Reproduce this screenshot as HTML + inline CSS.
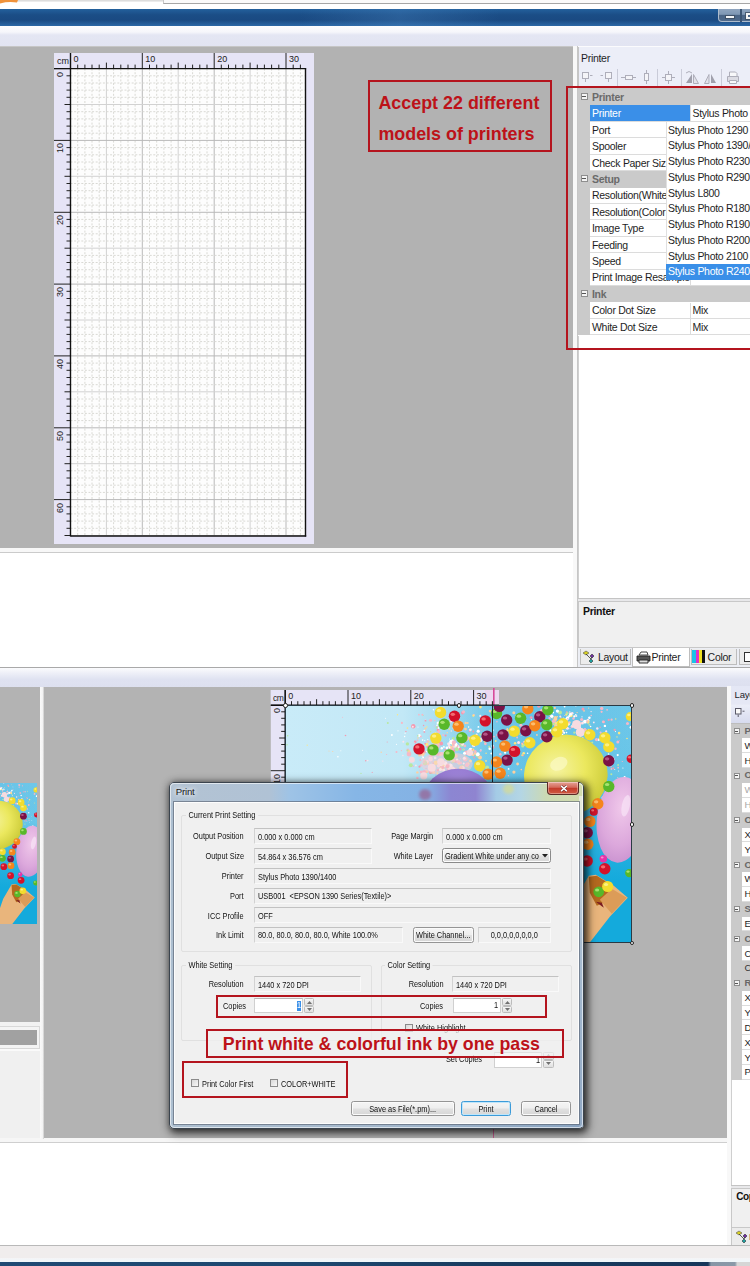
<!DOCTYPE html>
<html><head><meta charset="utf-8"><title>Print settings</title>
<style>
html,body{margin:0;padding:0}
body{width:750px;height:1266px;position:relative;overflow:hidden;background:#fff;font-family:"Liberation Sans",sans-serif;font-size:11px;color:#1a1a1a}
div,span.t,svg{position:absolute;box-sizing:border-box}
span.t{white-space:nowrap;line-height:1;letter-spacing:-.3px;font-size:10.5px}
span.t.d{font-size:9px;letter-spacing:0;transform:scaleX(.82);transform-origin:0 0;color:#111}
span.t.dr{font-size:9px;letter-spacing:0;transform:scaleX(.82);transform-origin:100% 0;color:#111;text-align:right}
.fld{border:1px solid #f9f9f9;border-top-color:#c2c2c2;border-left-color:#d2d2d2;background:#f0f0f0}
.red{border:2px solid #b4141e}
span.t.rt{font-weight:bold;color:#bd1219;letter-spacing:0;font-size:17.9px}
</style></head>
<body>
<div style="left:0px;top:0px;width:750px;height:9px;background:#fff"></div>
<div style="left:0px;top:0px;width:163px;height:2px;background:linear-gradient(#d6d6d6,#f2f2f2)"></div>
<div style="left:163px;top:0px;width:587px;height:4px;background:#fafafa;border-bottom:1px solid #a6a6a6;border-left:1px solid #c8c8c8"></div>
<svg style="left:0;top:0" width="20" height="4"><path d="M0 0H18L17 2.6Q9 1.2 0 3.4Z" fill="#f0923a"/></svg>
<div style="left:0px;top:9px;width:750px;height:17px;background:linear-gradient(#23609c 0%,#1b4d86 35%,#1a4a82 65%,#2c68a6 100%)"></div>
<div style="left:300px;top:9px;width:200px;height:17px;background:linear-gradient(90deg,rgba(70,130,190,0),rgba(70,130,190,.35),rgba(70,130,190,0))"></div>
<div style="left:718.4px;top:8.8px;width:40px;height:13.4px;border:1px solid #aebccc;border-top:none;border-radius:0 0 0 4px;background:linear-gradient(#8fa5bf,#7f97b4 45%,#4a6485 50%,#4f6a8c)"></div>
<div style="left:725.6px;top:16px;width:8px;height:2.2px;background:#f4f6f8;box-shadow:0 0 0 1px rgba(60,76,96,.8)"></div>
<div style="left:740.4px;top:9px;width:1.2px;height:12.6px;background:#3b5472"></div>
<div style="left:746px;top:13.2px;width:8px;height:6px;border:2px solid #f4f4f4;box-shadow:0 0 0 1px rgba(60,76,96,.8)"></div>
<div style="left:0px;top:26px;width:750px;height:20px;background:linear-gradient(#fdfdfe 0,#f6f6fb 30%,#e4e6f3 45%,#e2e4f2 100%)"></div>
<div style="left:0px;top:46px;width:573px;height:502px;background:#b2b2b2;border-top:1px solid #c6c6c6"></div>
<div style="left:0px;top:548px;width:573px;height:4.2px;background:#f7f7f7"></div>
<div style="left:0px;top:552.2px;width:573px;height:1.3px;background:#cbcbcb"></div>
<svg style="left:54px;top:53px" width="260" height="491" viewBox="0 0 260 491"><rect width="260" height="491" fill="#e6e4f6"/><rect x="16.5" y="15.599999999999994" width="235.0" height="467.4" fill="#fdfdfd"/><line x1="23.7" y1="15.599999999999994" x2="23.7" y2="483.0" stroke="#d9d9d4" stroke-width="1" stroke-dasharray="2 1.6"/><line x1="30.9" y1="15.599999999999994" x2="30.9" y2="483.0" stroke="#d9d9d4" stroke-width="1" stroke-dasharray="2 1.6"/><line x1="38.0" y1="15.599999999999994" x2="38.0" y2="483.0" stroke="#d9d9d4" stroke-width="1" stroke-dasharray="2 1.6"/><line x1="45.2" y1="15.599999999999994" x2="45.2" y2="483.0" stroke="#d9d9d4" stroke-width="1" stroke-dasharray="2 1.6"/><line x1="52.4" y1="15.599999999999994" x2="52.4" y2="483.0" stroke="#d2d2d2" stroke-width="1"/><line x1="59.6" y1="15.599999999999994" x2="59.6" y2="483.0" stroke="#d9d9d4" stroke-width="1" stroke-dasharray="2 1.6"/><line x1="66.8" y1="15.599999999999994" x2="66.8" y2="483.0" stroke="#d9d9d4" stroke-width="1" stroke-dasharray="2 1.6"/><line x1="74.0" y1="15.599999999999994" x2="74.0" y2="483.0" stroke="#d9d9d4" stroke-width="1" stroke-dasharray="2 1.6"/><line x1="81.1" y1="15.599999999999994" x2="81.1" y2="483.0" stroke="#d9d9d4" stroke-width="1" stroke-dasharray="2 1.6"/><line x1="88.3" y1="15.599999999999994" x2="88.3" y2="483.0" stroke="#b9b9b9" stroke-width="1"/><line x1="95.5" y1="15.599999999999994" x2="95.5" y2="483.0" stroke="#d9d9d4" stroke-width="1" stroke-dasharray="2 1.6"/><line x1="102.7" y1="15.599999999999994" x2="102.7" y2="483.0" stroke="#d9d9d4" stroke-width="1" stroke-dasharray="2 1.6"/><line x1="109.9" y1="15.599999999999994" x2="109.9" y2="483.0" stroke="#d9d9d4" stroke-width="1" stroke-dasharray="2 1.6"/><line x1="117.1" y1="15.599999999999994" x2="117.1" y2="483.0" stroke="#d9d9d4" stroke-width="1" stroke-dasharray="2 1.6"/><line x1="124.2" y1="15.599999999999994" x2="124.2" y2="483.0" stroke="#d2d2d2" stroke-width="1"/><line x1="131.4" y1="15.599999999999994" x2="131.4" y2="483.0" stroke="#d9d9d4" stroke-width="1" stroke-dasharray="2 1.6"/><line x1="138.6" y1="15.599999999999994" x2="138.6" y2="483.0" stroke="#d9d9d4" stroke-width="1" stroke-dasharray="2 1.6"/><line x1="145.8" y1="15.599999999999994" x2="145.8" y2="483.0" stroke="#d9d9d4" stroke-width="1" stroke-dasharray="2 1.6"/><line x1="153.0" y1="15.599999999999994" x2="153.0" y2="483.0" stroke="#d9d9d4" stroke-width="1" stroke-dasharray="2 1.6"/><line x1="160.2" y1="15.599999999999994" x2="160.2" y2="483.0" stroke="#b9b9b9" stroke-width="1"/><line x1="167.3" y1="15.599999999999994" x2="167.3" y2="483.0" stroke="#d9d9d4" stroke-width="1" stroke-dasharray="2 1.6"/><line x1="174.5" y1="15.599999999999994" x2="174.5" y2="483.0" stroke="#d9d9d4" stroke-width="1" stroke-dasharray="2 1.6"/><line x1="181.7" y1="15.599999999999994" x2="181.7" y2="483.0" stroke="#d9d9d4" stroke-width="1" stroke-dasharray="2 1.6"/><line x1="188.9" y1="15.599999999999994" x2="188.9" y2="483.0" stroke="#d9d9d4" stroke-width="1" stroke-dasharray="2 1.6"/><line x1="196.1" y1="15.599999999999994" x2="196.1" y2="483.0" stroke="#d2d2d2" stroke-width="1"/><line x1="203.3" y1="15.599999999999994" x2="203.3" y2="483.0" stroke="#d9d9d4" stroke-width="1" stroke-dasharray="2 1.6"/><line x1="210.4" y1="15.599999999999994" x2="210.4" y2="483.0" stroke="#d9d9d4" stroke-width="1" stroke-dasharray="2 1.6"/><line x1="217.6" y1="15.599999999999994" x2="217.6" y2="483.0" stroke="#d9d9d4" stroke-width="1" stroke-dasharray="2 1.6"/><line x1="224.8" y1="15.599999999999994" x2="224.8" y2="483.0" stroke="#d9d9d4" stroke-width="1" stroke-dasharray="2 1.6"/><line x1="232.0" y1="15.599999999999994" x2="232.0" y2="483.0" stroke="#b9b9b9" stroke-width="1"/><line x1="239.2" y1="15.599999999999994" x2="239.2" y2="483.0" stroke="#d9d9d4" stroke-width="1" stroke-dasharray="2 1.6"/><line x1="246.4" y1="15.599999999999994" x2="246.4" y2="483.0" stroke="#d9d9d4" stroke-width="1" stroke-dasharray="2 1.6"/><line x1="16.5" y1="22.8" x2="251.5" y2="22.8" stroke="#d9d9d4" stroke-width="1" stroke-dasharray="2 1.6"/><line x1="16.5" y1="30.0" x2="251.5" y2="30.0" stroke="#d9d9d4" stroke-width="1" stroke-dasharray="2 1.6"/><line x1="16.5" y1="37.1" x2="251.5" y2="37.1" stroke="#d9d9d4" stroke-width="1" stroke-dasharray="2 1.6"/><line x1="16.5" y1="44.3" x2="251.5" y2="44.3" stroke="#d9d9d4" stroke-width="1" stroke-dasharray="2 1.6"/><line x1="16.5" y1="51.5" x2="251.5" y2="51.5" stroke="#d2d2d2" stroke-width="1"/><line x1="16.5" y1="58.7" x2="251.5" y2="58.7" stroke="#d9d9d4" stroke-width="1" stroke-dasharray="2 1.6"/><line x1="16.5" y1="65.9" x2="251.5" y2="65.9" stroke="#d9d9d4" stroke-width="1" stroke-dasharray="2 1.6"/><line x1="16.5" y1="73.1" x2="251.5" y2="73.1" stroke="#d9d9d4" stroke-width="1" stroke-dasharray="2 1.6"/><line x1="16.5" y1="80.2" x2="251.5" y2="80.2" stroke="#d9d9d4" stroke-width="1" stroke-dasharray="2 1.6"/><line x1="16.5" y1="87.4" x2="251.5" y2="87.4" stroke="#b9b9b9" stroke-width="1"/><line x1="16.5" y1="94.6" x2="251.5" y2="94.6" stroke="#d9d9d4" stroke-width="1" stroke-dasharray="2 1.6"/><line x1="16.5" y1="101.8" x2="251.5" y2="101.8" stroke="#d9d9d4" stroke-width="1" stroke-dasharray="2 1.6"/><line x1="16.5" y1="109.0" x2="251.5" y2="109.0" stroke="#d9d9d4" stroke-width="1" stroke-dasharray="2 1.6"/><line x1="16.5" y1="116.2" x2="251.5" y2="116.2" stroke="#d9d9d4" stroke-width="1" stroke-dasharray="2 1.6"/><line x1="16.5" y1="123.3" x2="251.5" y2="123.3" stroke="#d2d2d2" stroke-width="1"/><line x1="16.5" y1="130.5" x2="251.5" y2="130.5" stroke="#d9d9d4" stroke-width="1" stroke-dasharray="2 1.6"/><line x1="16.5" y1="137.7" x2="251.5" y2="137.7" stroke="#d9d9d4" stroke-width="1" stroke-dasharray="2 1.6"/><line x1="16.5" y1="144.9" x2="251.5" y2="144.9" stroke="#d9d9d4" stroke-width="1" stroke-dasharray="2 1.6"/><line x1="16.5" y1="152.1" x2="251.5" y2="152.1" stroke="#d9d9d4" stroke-width="1" stroke-dasharray="2 1.6"/><line x1="16.5" y1="159.3" x2="251.5" y2="159.3" stroke="#b9b9b9" stroke-width="1"/><line x1="16.5" y1="166.4" x2="251.5" y2="166.4" stroke="#d9d9d4" stroke-width="1" stroke-dasharray="2 1.6"/><line x1="16.5" y1="173.6" x2="251.5" y2="173.6" stroke="#d9d9d4" stroke-width="1" stroke-dasharray="2 1.6"/><line x1="16.5" y1="180.8" x2="251.5" y2="180.8" stroke="#d9d9d4" stroke-width="1" stroke-dasharray="2 1.6"/><line x1="16.5" y1="188.0" x2="251.5" y2="188.0" stroke="#d9d9d4" stroke-width="1" stroke-dasharray="2 1.6"/><line x1="16.5" y1="195.2" x2="251.5" y2="195.2" stroke="#d2d2d2" stroke-width="1"/><line x1="16.5" y1="202.4" x2="251.5" y2="202.4" stroke="#d9d9d4" stroke-width="1" stroke-dasharray="2 1.6"/><line x1="16.5" y1="209.5" x2="251.5" y2="209.5" stroke="#d9d9d4" stroke-width="1" stroke-dasharray="2 1.6"/><line x1="16.5" y1="216.7" x2="251.5" y2="216.7" stroke="#d9d9d4" stroke-width="1" stroke-dasharray="2 1.6"/><line x1="16.5" y1="223.9" x2="251.5" y2="223.9" stroke="#d9d9d4" stroke-width="1" stroke-dasharray="2 1.6"/><line x1="16.5" y1="231.1" x2="251.5" y2="231.1" stroke="#b9b9b9" stroke-width="1"/><line x1="16.5" y1="238.3" x2="251.5" y2="238.3" stroke="#d9d9d4" stroke-width="1" stroke-dasharray="2 1.6"/><line x1="16.5" y1="245.5" x2="251.5" y2="245.5" stroke="#d9d9d4" stroke-width="1" stroke-dasharray="2 1.6"/><line x1="16.5" y1="252.6" x2="251.5" y2="252.6" stroke="#d9d9d4" stroke-width="1" stroke-dasharray="2 1.6"/><line x1="16.5" y1="259.8" x2="251.5" y2="259.8" stroke="#d9d9d4" stroke-width="1" stroke-dasharray="2 1.6"/><line x1="16.5" y1="267.0" x2="251.5" y2="267.0" stroke="#d2d2d2" stroke-width="1"/><line x1="16.5" y1="274.2" x2="251.5" y2="274.2" stroke="#d9d9d4" stroke-width="1" stroke-dasharray="2 1.6"/><line x1="16.5" y1="281.4" x2="251.5" y2="281.4" stroke="#d9d9d4" stroke-width="1" stroke-dasharray="2 1.6"/><line x1="16.5" y1="288.6" x2="251.5" y2="288.6" stroke="#d9d9d4" stroke-width="1" stroke-dasharray="2 1.6"/><line x1="16.5" y1="295.7" x2="251.5" y2="295.7" stroke="#d9d9d4" stroke-width="1" stroke-dasharray="2 1.6"/><line x1="16.5" y1="302.9" x2="251.5" y2="302.9" stroke="#b9b9b9" stroke-width="1"/><line x1="16.5" y1="310.1" x2="251.5" y2="310.1" stroke="#d9d9d4" stroke-width="1" stroke-dasharray="2 1.6"/><line x1="16.5" y1="317.3" x2="251.5" y2="317.3" stroke="#d9d9d4" stroke-width="1" stroke-dasharray="2 1.6"/><line x1="16.5" y1="324.5" x2="251.5" y2="324.5" stroke="#d9d9d4" stroke-width="1" stroke-dasharray="2 1.6"/><line x1="16.5" y1="331.7" x2="251.5" y2="331.7" stroke="#d9d9d4" stroke-width="1" stroke-dasharray="2 1.6"/><line x1="16.5" y1="338.8" x2="251.5" y2="338.8" stroke="#d2d2d2" stroke-width="1"/><line x1="16.5" y1="346.0" x2="251.5" y2="346.0" stroke="#d9d9d4" stroke-width="1" stroke-dasharray="2 1.6"/><line x1="16.5" y1="353.2" x2="251.5" y2="353.2" stroke="#d9d9d4" stroke-width="1" stroke-dasharray="2 1.6"/><line x1="16.5" y1="360.4" x2="251.5" y2="360.4" stroke="#d9d9d4" stroke-width="1" stroke-dasharray="2 1.6"/><line x1="16.5" y1="367.6" x2="251.5" y2="367.6" stroke="#d9d9d4" stroke-width="1" stroke-dasharray="2 1.6"/><line x1="16.5" y1="374.8" x2="251.5" y2="374.8" stroke="#b9b9b9" stroke-width="1"/><line x1="16.5" y1="381.9" x2="251.5" y2="381.9" stroke="#d9d9d4" stroke-width="1" stroke-dasharray="2 1.6"/><line x1="16.5" y1="389.1" x2="251.5" y2="389.1" stroke="#d9d9d4" stroke-width="1" stroke-dasharray="2 1.6"/><line x1="16.5" y1="396.3" x2="251.5" y2="396.3" stroke="#d9d9d4" stroke-width="1" stroke-dasharray="2 1.6"/><line x1="16.5" y1="403.5" x2="251.5" y2="403.5" stroke="#d9d9d4" stroke-width="1" stroke-dasharray="2 1.6"/><line x1="16.5" y1="410.7" x2="251.5" y2="410.7" stroke="#d2d2d2" stroke-width="1"/><line x1="16.5" y1="417.8" x2="251.5" y2="417.8" stroke="#d9d9d4" stroke-width="1" stroke-dasharray="2 1.6"/><line x1="16.5" y1="425.0" x2="251.5" y2="425.0" stroke="#d9d9d4" stroke-width="1" stroke-dasharray="2 1.6"/><line x1="16.5" y1="432.2" x2="251.5" y2="432.2" stroke="#d9d9d4" stroke-width="1" stroke-dasharray="2 1.6"/><line x1="16.5" y1="439.4" x2="251.5" y2="439.4" stroke="#d9d9d4" stroke-width="1" stroke-dasharray="2 1.6"/><line x1="16.5" y1="446.6" x2="251.5" y2="446.6" stroke="#b9b9b9" stroke-width="1"/><line x1="16.5" y1="453.8" x2="251.5" y2="453.8" stroke="#d9d9d4" stroke-width="1" stroke-dasharray="2 1.6"/><line x1="16.5" y1="460.9" x2="251.5" y2="460.9" stroke="#d9d9d4" stroke-width="1" stroke-dasharray="2 1.6"/><line x1="16.5" y1="468.1" x2="251.5" y2="468.1" stroke="#d9d9d4" stroke-width="1" stroke-dasharray="2 1.6"/><line x1="16.5" y1="475.3" x2="251.5" y2="475.3" stroke="#d9d9d4" stroke-width="1" stroke-dasharray="2 1.6"/><line x1="16.5" y1="482.5" x2="251.5" y2="482.5" stroke="#d2d2d2" stroke-width="1"/></svg>
<svg style="left:0;top:0" width="320" height="550"><line x1="70.5" y1="53.0" x2="70.5" y2="68.6" stroke="#222" stroke-width="1"/><line x1="77.7" y1="64.6" x2="77.7" y2="68.6" stroke="#222" stroke-width="1"/><line x1="84.9" y1="64.6" x2="84.9" y2="68.6" stroke="#222" stroke-width="1"/><line x1="92.0" y1="64.6" x2="92.0" y2="68.6" stroke="#222" stroke-width="1"/><line x1="99.2" y1="64.6" x2="99.2" y2="68.6" stroke="#222" stroke-width="1"/><line x1="106.4" y1="62.599999999999994" x2="106.4" y2="68.6" stroke="#222" stroke-width="1"/><line x1="113.6" y1="64.6" x2="113.6" y2="68.6" stroke="#222" stroke-width="1"/><line x1="120.8" y1="64.6" x2="120.8" y2="68.6" stroke="#222" stroke-width="1"/><line x1="128.0" y1="64.6" x2="128.0" y2="68.6" stroke="#222" stroke-width="1"/><line x1="135.1" y1="64.6" x2="135.1" y2="68.6" stroke="#222" stroke-width="1"/><line x1="142.3" y1="53.0" x2="142.3" y2="68.6" stroke="#222" stroke-width="1"/><line x1="149.5" y1="64.6" x2="149.5" y2="68.6" stroke="#222" stroke-width="1"/><line x1="156.7" y1="64.6" x2="156.7" y2="68.6" stroke="#222" stroke-width="1"/><line x1="163.9" y1="64.6" x2="163.9" y2="68.6" stroke="#222" stroke-width="1"/><line x1="171.1" y1="64.6" x2="171.1" y2="68.6" stroke="#222" stroke-width="1"/><line x1="178.2" y1="62.599999999999994" x2="178.2" y2="68.6" stroke="#222" stroke-width="1"/><line x1="185.4" y1="64.6" x2="185.4" y2="68.6" stroke="#222" stroke-width="1"/><line x1="192.6" y1="64.6" x2="192.6" y2="68.6" stroke="#222" stroke-width="1"/><line x1="199.8" y1="64.6" x2="199.8" y2="68.6" stroke="#222" stroke-width="1"/><line x1="207.0" y1="64.6" x2="207.0" y2="68.6" stroke="#222" stroke-width="1"/><line x1="214.2" y1="53.0" x2="214.2" y2="68.6" stroke="#222" stroke-width="1"/><line x1="221.3" y1="64.6" x2="221.3" y2="68.6" stroke="#222" stroke-width="1"/><line x1="228.5" y1="64.6" x2="228.5" y2="68.6" stroke="#222" stroke-width="1"/><line x1="235.7" y1="64.6" x2="235.7" y2="68.6" stroke="#222" stroke-width="1"/><line x1="242.9" y1="64.6" x2="242.9" y2="68.6" stroke="#222" stroke-width="1"/><line x1="250.1" y1="62.599999999999994" x2="250.1" y2="68.6" stroke="#222" stroke-width="1"/><line x1="257.3" y1="64.6" x2="257.3" y2="68.6" stroke="#222" stroke-width="1"/><line x1="264.4" y1="64.6" x2="264.4" y2="68.6" stroke="#222" stroke-width="1"/><line x1="271.6" y1="64.6" x2="271.6" y2="68.6" stroke="#222" stroke-width="1"/><line x1="278.8" y1="64.6" x2="278.8" y2="68.6" stroke="#222" stroke-width="1"/><line x1="286.0" y1="53.0" x2="286.0" y2="68.6" stroke="#222" stroke-width="1"/><line x1="293.2" y1="64.6" x2="293.2" y2="68.6" stroke="#222" stroke-width="1"/><line x1="300.4" y1="64.6" x2="300.4" y2="68.6" stroke="#222" stroke-width="1"/><line x1="54.0" y1="68.6" x2="70.5" y2="68.6" stroke="#222" stroke-width="1"/><line x1="66.5" y1="75.8" x2="70.5" y2="75.8" stroke="#222" stroke-width="1"/><line x1="66.5" y1="83.0" x2="70.5" y2="83.0" stroke="#222" stroke-width="1"/><line x1="66.5" y1="90.1" x2="70.5" y2="90.1" stroke="#222" stroke-width="1"/><line x1="66.5" y1="97.3" x2="70.5" y2="97.3" stroke="#222" stroke-width="1"/><line x1="64.5" y1="104.5" x2="70.5" y2="104.5" stroke="#222" stroke-width="1"/><line x1="66.5" y1="111.7" x2="70.5" y2="111.7" stroke="#222" stroke-width="1"/><line x1="66.5" y1="118.9" x2="70.5" y2="118.9" stroke="#222" stroke-width="1"/><line x1="66.5" y1="126.1" x2="70.5" y2="126.1" stroke="#222" stroke-width="1"/><line x1="66.5" y1="133.2" x2="70.5" y2="133.2" stroke="#222" stroke-width="1"/><line x1="54.0" y1="140.4" x2="70.5" y2="140.4" stroke="#222" stroke-width="1"/><line x1="66.5" y1="147.6" x2="70.5" y2="147.6" stroke="#222" stroke-width="1"/><line x1="66.5" y1="154.8" x2="70.5" y2="154.8" stroke="#222" stroke-width="1"/><line x1="66.5" y1="162.0" x2="70.5" y2="162.0" stroke="#222" stroke-width="1"/><line x1="66.5" y1="169.2" x2="70.5" y2="169.2" stroke="#222" stroke-width="1"/><line x1="64.5" y1="176.3" x2="70.5" y2="176.3" stroke="#222" stroke-width="1"/><line x1="66.5" y1="183.5" x2="70.5" y2="183.5" stroke="#222" stroke-width="1"/><line x1="66.5" y1="190.7" x2="70.5" y2="190.7" stroke="#222" stroke-width="1"/><line x1="66.5" y1="197.9" x2="70.5" y2="197.9" stroke="#222" stroke-width="1"/><line x1="66.5" y1="205.1" x2="70.5" y2="205.1" stroke="#222" stroke-width="1"/><line x1="54.0" y1="212.3" x2="70.5" y2="212.3" stroke="#222" stroke-width="1"/><line x1="66.5" y1="219.4" x2="70.5" y2="219.4" stroke="#222" stroke-width="1"/><line x1="66.5" y1="226.6" x2="70.5" y2="226.6" stroke="#222" stroke-width="1"/><line x1="66.5" y1="233.8" x2="70.5" y2="233.8" stroke="#222" stroke-width="1"/><line x1="66.5" y1="241.0" x2="70.5" y2="241.0" stroke="#222" stroke-width="1"/><line x1="64.5" y1="248.2" x2="70.5" y2="248.2" stroke="#222" stroke-width="1"/><line x1="66.5" y1="255.4" x2="70.5" y2="255.4" stroke="#222" stroke-width="1"/><line x1="66.5" y1="262.5" x2="70.5" y2="262.5" stroke="#222" stroke-width="1"/><line x1="66.5" y1="269.7" x2="70.5" y2="269.7" stroke="#222" stroke-width="1"/><line x1="66.5" y1="276.9" x2="70.5" y2="276.9" stroke="#222" stroke-width="1"/><line x1="54.0" y1="284.1" x2="70.5" y2="284.1" stroke="#222" stroke-width="1"/><line x1="66.5" y1="291.3" x2="70.5" y2="291.3" stroke="#222" stroke-width="1"/><line x1="66.5" y1="298.5" x2="70.5" y2="298.5" stroke="#222" stroke-width="1"/><line x1="66.5" y1="305.6" x2="70.5" y2="305.6" stroke="#222" stroke-width="1"/><line x1="66.5" y1="312.8" x2="70.5" y2="312.8" stroke="#222" stroke-width="1"/><line x1="64.5" y1="320.0" x2="70.5" y2="320.0" stroke="#222" stroke-width="1"/><line x1="66.5" y1="327.2" x2="70.5" y2="327.2" stroke="#222" stroke-width="1"/><line x1="66.5" y1="334.4" x2="70.5" y2="334.4" stroke="#222" stroke-width="1"/><line x1="66.5" y1="341.6" x2="70.5" y2="341.6" stroke="#222" stroke-width="1"/><line x1="66.5" y1="348.7" x2="70.5" y2="348.7" stroke="#222" stroke-width="1"/><line x1="54.0" y1="355.9" x2="70.5" y2="355.9" stroke="#222" stroke-width="1"/><line x1="66.5" y1="363.1" x2="70.5" y2="363.1" stroke="#222" stroke-width="1"/><line x1="66.5" y1="370.3" x2="70.5" y2="370.3" stroke="#222" stroke-width="1"/><line x1="66.5" y1="377.5" x2="70.5" y2="377.5" stroke="#222" stroke-width="1"/><line x1="66.5" y1="384.7" x2="70.5" y2="384.7" stroke="#222" stroke-width="1"/><line x1="64.5" y1="391.8" x2="70.5" y2="391.8" stroke="#222" stroke-width="1"/><line x1="66.5" y1="399.0" x2="70.5" y2="399.0" stroke="#222" stroke-width="1"/><line x1="66.5" y1="406.2" x2="70.5" y2="406.2" stroke="#222" stroke-width="1"/><line x1="66.5" y1="413.4" x2="70.5" y2="413.4" stroke="#222" stroke-width="1"/><line x1="66.5" y1="420.6" x2="70.5" y2="420.6" stroke="#222" stroke-width="1"/><line x1="54.0" y1="427.8" x2="70.5" y2="427.8" stroke="#222" stroke-width="1"/><line x1="66.5" y1="434.9" x2="70.5" y2="434.9" stroke="#222" stroke-width="1"/><line x1="66.5" y1="442.1" x2="70.5" y2="442.1" stroke="#222" stroke-width="1"/><line x1="66.5" y1="449.3" x2="70.5" y2="449.3" stroke="#222" stroke-width="1"/><line x1="66.5" y1="456.5" x2="70.5" y2="456.5" stroke="#222" stroke-width="1"/><line x1="64.5" y1="463.7" x2="70.5" y2="463.7" stroke="#222" stroke-width="1"/><line x1="66.5" y1="470.8" x2="70.5" y2="470.8" stroke="#222" stroke-width="1"/><line x1="66.5" y1="478.0" x2="70.5" y2="478.0" stroke="#222" stroke-width="1"/><line x1="66.5" y1="485.2" x2="70.5" y2="485.2" stroke="#222" stroke-width="1"/><line x1="66.5" y1="492.4" x2="70.5" y2="492.4" stroke="#222" stroke-width="1"/><line x1="54.0" y1="499.6" x2="70.5" y2="499.6" stroke="#222" stroke-width="1"/><line x1="66.5" y1="506.8" x2="70.5" y2="506.8" stroke="#222" stroke-width="1"/><line x1="66.5" y1="513.9" x2="70.5" y2="513.9" stroke="#222" stroke-width="1"/><line x1="66.5" y1="521.1" x2="70.5" y2="521.1" stroke="#222" stroke-width="1"/><line x1="66.5" y1="528.3" x2="70.5" y2="528.3" stroke="#222" stroke-width="1"/><line x1="64.5" y1="535.5" x2="70.5" y2="535.5" stroke="#222" stroke-width="1"/><line x1="54" y1="68.6" x2="306.2" y2="68.6" stroke="#111" stroke-width="1.4"/><line x1="70.5" y1="53" x2="70.5" y2="536.6" stroke="#111" stroke-width="1.4"/><line x1="70.5" y1="536" x2="306.2" y2="536" stroke="#111" stroke-width="1.4"/><line x1="305.5" y1="68.6" x2="305.5" y2="536.6" stroke="#111" stroke-width="1.4"/></svg>
<span class="t" style="left:57px;top:57px;font-size:9px;letter-spacing:0;color:#222">cm</span>
<span class="t" style="left:73.5px;top:55px;font-size:9px;letter-spacing:0;color:#222">0</span>
<span class="t" style="left:145.32999999999998px;top:55px;font-size:9px;letter-spacing:0;color:#222">10</span>
<span class="t" style="left:217.16px;top:55px;font-size:9px;letter-spacing:0;color:#222">20</span>
<span class="t" style="left:288.99px;top:55px;font-size:9px;letter-spacing:0;color:#222">30</span>
<span class="t" style="left:56px;top:71.6px;font-size:9px;letter-spacing:0;color:#222;transform-origin:0 0;transform:rotate(-90deg) translateX(-100%)">0</span>
<span class="t" style="left:56px;top:143.4px;font-size:9px;letter-spacing:0;color:#222;transform-origin:0 0;transform:rotate(-90deg) translateX(-100%)">10</span>
<span class="t" style="left:56px;top:215.3px;font-size:9px;letter-spacing:0;color:#222;transform-origin:0 0;transform:rotate(-90deg) translateX(-100%)">20</span>
<span class="t" style="left:56px;top:287.1px;font-size:9px;letter-spacing:0;color:#222;transform-origin:0 0;transform:rotate(-90deg) translateX(-100%)">30</span>
<span class="t" style="left:56px;top:358.9px;font-size:9px;letter-spacing:0;color:#222;transform-origin:0 0;transform:rotate(-90deg) translateX(-100%)">40</span>
<span class="t" style="left:56px;top:430.8px;font-size:9px;letter-spacing:0;color:#222;transform-origin:0 0;transform:rotate(-90deg) translateX(-100%)">50</span>
<span class="t" style="left:56px;top:502.6px;font-size:9px;letter-spacing:0;color:#222;transform-origin:0 0;transform:rotate(-90deg) translateX(-100%)">60</span>
<div class="red" style="left:368px;top:79.5px;width:183.5px;height:72px"></div>
<span class="t rt" style="left:378.4px;top:95.4px">Accept 22 different</span>
<span class="t rt" style="left:378.4px;top:125.5px">models of printers</span>
<div style="left:572.8px;top:46px;width:4.6px;height:621px;background:#f8f8f8"></div>
<div style="left:577.2px;top:46px;width:1.4px;height:621px;background:#c6c6c6"></div>
<div style="left:578.6px;top:46px;width:172px;height:621px;background:#eceef8"></div>
<div style="left:578px;top:46px;width:172px;height:1px;background:#fbfbfd"></div>
<span class="t" style="left:581px;top:53px;color:#1e1e28">Printer</span>
<svg style="left:578px;top:67px" width="172" height="22" viewBox="578 66 172 22" fill="none" stroke="#aeaeba" stroke-width="1"><rect x="582.5" y="71.5" width="6" height="6" fill="#f4f4f8"/><path d="M585.5 78v3M590 74.5h2.5"/><rect x="605.5" y="71.5" width="6" height="6" fill="#f4f4f8"/><path d="M608.5 78v3M603 74.5h-2.5"/><line x1="617.5" y1="68" x2="617.5" y2="86" stroke="#c9cbd8"/><rect x="625.5" y="74.5" width="7" height="4" fill="#f4f4f8"/><path d="M621 76.5h4M633 76.5h3"/><rect x="644.5" y="72.5" width="4" height="7" fill="#f4f4f8"/><path d="M646.5 69v3M646.5 80v3"/><line x1="657.5" y1="68" x2="657.5" y2="86" stroke="#c9cbd8"/><rect x="665.5" y="73.5" width="6" height="6" fill="#f4f4f8"/><path d="M668.5 70v3M668.5 80v3M662 76.5h3M672 76.5h3"/><line x1="681.5" y1="68" x2="681.5" y2="86" stroke="#c9cbd8"/><path d="M686 82h6v-9z" fill="#a0a0ac" stroke="none"/><path d="M693.5 82.5h5l-5-9z" fill="#e2e2ea"/><path d="M686 72q3-3 6 0" /><path d="M704.5 82.5h4.5v-9z" fill="#e2e2ea"/><path d="M711 82h5l-5-9z" fill="#a0a0ac" stroke="none"/><line x1="721.5" y1="68" x2="721.5" y2="86" stroke="#c9cbd8"/><path d="M727.5 75.5h11v5h-11z" fill="#dcdce4"/><path d="M729.5 75v-4h6l1.5 1.500v2.500" fill="#f8f8fa"/><path d="M729.500 79.500h7v3h-7z" fill="#f8f8fa"/></svg>
<div style="left:578px;top:88px;width:172px;height:250px;background:#fff;border-top:1px solid #c8c8c8"></div>
<div style="left:578px;top:89.0px;width:11.5px;height:246.3px;background:#cacaca"></div>
<div style="left:578px;top:89.0px;width:172px;height:16.42px;background:#cacaca"></div>
<div style="left:580.5px;top:93.2px;width:7px;height:7px;border:1px solid #8e8e8e;background:#f4f4f4"></div>
<div style="left:582px;top:96.2px;width:4px;height:1px;background:#555"></div>
<span class="t" style="left:592px;top:91.6px;font-weight:bold;color:#6a6a6a;letter-spacing:-.3px">Printer</span>
<div style="left:589.5px;top:105.4px;width:160.5px;height:16.42px;border-bottom:1px solid #dcdcdc;background:#fff"></div>
<div style="left:689.5px;top:105.4px;width:1px;height:16.42px;background:#dcdcdc"></div>
<div style="left:589.5px;top:105.4px;width:100px;height:15.820000000000002px;background:#3a8fe8"></div>
<span class="t" style="left:592px;top:108.2px;color:#fff">Printer</span>
<span class="t" style="left:692.5px;top:108.2px;color:#1e1e1e">Stylus Photo</span>
<div style="left:589.5px;top:121.8px;width:160.5px;height:16.42px;border-bottom:1px solid #dcdcdc;background:#fff"></div>
<div style="left:689.5px;top:121.8px;width:1px;height:16.42px;background:#dcdcdc"></div>
<span class="t" style="left:592px;top:124.6px;color:#1e1e1e">Port</span>
<div style="left:589.5px;top:138.3px;width:160.5px;height:16.42px;border-bottom:1px solid #dcdcdc;background:#fff"></div>
<div style="left:689.5px;top:138.3px;width:1px;height:16.42px;background:#dcdcdc"></div>
<span class="t" style="left:592px;top:141.1px;color:#1e1e1e">Spooler</span>
<div style="left:589.5px;top:154.7px;width:160.5px;height:16.42px;border-bottom:1px solid #dcdcdc;background:#fff"></div>
<div style="left:689.5px;top:154.7px;width:1px;height:16.42px;background:#dcdcdc"></div>
<span class="t" style="left:592px;top:157.5px;color:#1e1e1e">Check Paper Siz</span>
<div style="left:578px;top:171.1px;width:172px;height:16.42px;background:#cacaca"></div>
<div style="left:580.5px;top:175.3px;width:7px;height:7px;border:1px solid #8e8e8e;background:#f4f4f4"></div>
<div style="left:582px;top:178.3px;width:4px;height:1px;background:#555"></div>
<span class="t" style="left:592px;top:173.7px;font-weight:bold;color:#6a6a6a;letter-spacing:-.3px">Setup</span>
<div style="left:589.5px;top:187.5px;width:160.5px;height:16.42px;border-bottom:1px solid #dcdcdc;background:#fff"></div>
<div style="left:689.5px;top:187.5px;width:1px;height:16.42px;background:#dcdcdc"></div>
<span class="t" style="left:592px;top:190.3px;color:#1e1e1e">Resolution(White</span>
<div style="left:589.5px;top:203.9px;width:160.5px;height:16.42px;border-bottom:1px solid #dcdcdc;background:#fff"></div>
<div style="left:689.5px;top:203.9px;width:1px;height:16.42px;background:#dcdcdc"></div>
<span class="t" style="left:592px;top:206.7px;color:#1e1e1e">Resolution(Color</span>
<div style="left:589.5px;top:220.4px;width:160.5px;height:16.42px;border-bottom:1px solid #dcdcdc;background:#fff"></div>
<div style="left:689.5px;top:220.4px;width:1px;height:16.42px;background:#dcdcdc"></div>
<span class="t" style="left:592px;top:223.2px;color:#1e1e1e">Image Type</span>
<div style="left:589.5px;top:236.8px;width:160.5px;height:16.42px;border-bottom:1px solid #dcdcdc;background:#fff"></div>
<div style="left:689.5px;top:236.8px;width:1px;height:16.42px;background:#dcdcdc"></div>
<span class="t" style="left:592px;top:239.6px;color:#1e1e1e">Feeding</span>
<div style="left:589.5px;top:253.2px;width:160.5px;height:16.42px;border-bottom:1px solid #dcdcdc;background:#fff"></div>
<div style="left:689.5px;top:253.2px;width:1px;height:16.42px;background:#dcdcdc"></div>
<span class="t" style="left:592px;top:256.0px;color:#1e1e1e">Speed</span>
<div style="left:589.5px;top:269.6px;width:160.5px;height:16.42px;border-bottom:1px solid #dcdcdc;background:#fff"></div>
<div style="left:689.5px;top:269.6px;width:1px;height:16.42px;background:#dcdcdc"></div>
<span class="t" style="left:592px;top:272.4px;color:#1e1e1e">Print Image Resample</span>
<div style="left:578px;top:286.0px;width:172px;height:16.42px;background:#cacaca"></div>
<div style="left:580.5px;top:290.2px;width:7px;height:7px;border:1px solid #8e8e8e;background:#f4f4f4"></div>
<div style="left:582px;top:293.2px;width:4px;height:1px;background:#555"></div>
<span class="t" style="left:592px;top:288.6px;font-weight:bold;color:#6a6a6a;letter-spacing:-.3px">Ink</span>
<div style="left:589.5px;top:302.5px;width:160.5px;height:16.42px;border-bottom:1px solid #dcdcdc;background:#fff"></div>
<div style="left:689.5px;top:302.5px;width:1px;height:16.42px;background:#dcdcdc"></div>
<span class="t" style="left:592px;top:305.3px;color:#1e1e1e">Color Dot Size</span>
<span class="t" style="left:692.5px;top:305.3px;color:#1e1e1e">Mix</span>
<div style="left:589.5px;top:318.9px;width:160.5px;height:16.42px;border-bottom:1px solid #dcdcdc;background:#fff"></div>
<div style="left:689.5px;top:318.9px;width:1px;height:16.42px;background:#dcdcdc"></div>
<span class="t" style="left:592px;top:321.7px;color:#1e1e1e">White Dot Size</span>
<span class="t" style="left:692.5px;top:321.7px;color:#1e1e1e">Mix</span>
<div style="left:666px;top:122.0px;width:90px;height:158.0px;background:#fff;border-left:1px solid #e0e0e0"></div>
<span class="t" style="left:668px;top:124.6px;color:#1e1e1e">Stylus Photo 1290</span>
<span class="t" style="left:668px;top:140.3px;color:#1e1e1e">Stylus Photo 1390/</span>
<span class="t" style="left:668px;top:156.1px;color:#1e1e1e">Stylus Photo R230</span>
<span class="t" style="left:668px;top:171.8px;color:#1e1e1e">Stylus Photo R290</span>
<span class="t" style="left:668px;top:187.6px;color:#1e1e1e">Stylus L800</span>
<span class="t" style="left:668px;top:203.3px;color:#1e1e1e">Stylus Photo R1800</span>
<span class="t" style="left:668px;top:219.1px;color:#1e1e1e">Stylus Photo R1900</span>
<span class="t" style="left:668px;top:234.8px;color:#1e1e1e">Stylus Photo R2000</span>
<span class="t" style="left:668px;top:250.6px;color:#1e1e1e">Stylus Photo 2100</span>
<div style="left:666px;top:263.6px;width:90px;height:16.55px;background:#3a8fe8"></div>
<span class="t" style="left:668px;top:266.4px;color:#fff">Stylus Photo R2400</span>
<div style="left:578px;top:336px;width:172px;height:262px;background:#fff;border-left:1px solid #d0d0d0"></div>
<div style="left:578px;top:598px;width:172px;height:3px;background:#e8e8ea;border-top:1px solid #c4c4c4"></div>
<div style="left:578px;top:601px;width:172px;height:47px;background:#f0f0f0;border:1px solid #c8c8c8;border-right:none"></div>
<span class="t" style="left:583px;top:606px;font-weight:bold;letter-spacing:-.3px;color:#111">Printer</span>
<div style="left:578px;top:648px;width:172px;height:19px;background:#eceef4"></div>
<div style="left:579.8px;top:649px;width:51.6px;height:16px;background:#ececec;border:1px solid #bdbdbd;border-top:none"></div>
<svg style="left:582px;top:650px" width="14" height="14" viewBox="0 0 14 14"><path d="M1 3l3-2 3 2-3 2z" fill="#d8d020" stroke="#555" stroke-width=".6"/><path d="M8 6l2-2 2 2-2 2z" fill="#7030a0" stroke="#333" stroke-width=".6"/><path d="M7 11l2-2 2 2-2 2z" fill="#20a0a0" stroke="#333" stroke-width=".6"/><path d="M4 4l5 5M9 9l1-2" stroke="#333" stroke-width=".8" fill="none"/></svg>
<span class="t" style="left:598px;top:651.5px;color:#222">Layout</span>
<div style="left:632px;top:648px;width:57.5px;height:19px;background:#fff;border:1px solid #bdbdbd;border-top:none"></div>
<svg style="left:635.5px;top:651px" width="15" height="13" viewBox="0 0 15 13"><path d="M3 4l2-3h6l1 3z" fill="#fff" stroke="#333" stroke-width=".9"/><path d="M1 5h13v5H1z" fill="#555" stroke="#222" stroke-width=".9"/><path d="M3 9h9v3H3z" fill="#ddd" stroke="#222" stroke-width=".9"/></svg>
<span class="t" style="left:651.5px;top:651.5px;color:#222">Printer</span>
<div style="left:690.5px;top:649px;width:46px;height:16px;background:#ececec;border:1px solid #bdbdbd;border-top:none"></div>
<div style="left:692.4px;top:650px;width:3.2px;height:13px;background:#19c2e8"></div>
<div style="left:695.6px;top:650px;width:3.2px;height:13px;background:#e030c8"></div>
<div style="left:698.8px;top:650px;width:3.2px;height:13px;background:#f0e020"></div>
<div style="left:702.0px;top:650px;width:3.2px;height:13px;background:#111"></div>
<span class="t" style="left:707.6px;top:651.5px;color:#222">Color</span>
<div style="left:739.4px;top:649px;width:12px;height:16px;background:#ececec;border:1px solid #bdbdbd;border-top:none"></div>
<div style="left:743.5px;top:652px;width:10px;height:10px;background:#fff;border:1px solid #333"></div>
<div style="left:0px;top:553.5px;width:572.8px;height:113.5px;background:#fff"></div>
<div class="red" style="left:566px;top:86px;width:200px;height:263.6px"></div>
<div style="left:0px;top:667px;width:750px;height:1px;background:#a9a9a9"></div>
<div style="left:0px;top:668px;width:750px;height:19px;background:linear-gradient(#fbfbfd 0,#eceef7 30%,#dfe2f1 60%,#dde0ef 100%)"></div>
<div style="left:0px;top:686.5px;width:727px;height:452px;background:#b3b3b3"></div>
<div style="left:0px;top:1137.7px;width:750px;height:4.2px;background:#f6f6f6"></div>
<div style="left:0px;top:1141.8px;width:750px;height:1.2px;background:#cfcfcf"></div>
<div style="left:0px;top:1143px;width:750px;height:103px;background:#fff"></div>
<div style="left:40px;top:686.5px;width:4px;height:452px;background:linear-gradient(90deg,#fafafa 0,#f2f2f2 70%,#c4c4c4 100%)"></div>
<div style="left:0px;top:1021.5px;width:40px;height:5px;background:#f2f2f2"></div>
<div style="left:0px;top:1026px;width:39.5px;height:22.5px;background:#f4f4f4;border:1px solid #d8d8d8;border-left:none"></div>
<div style="left:0px;top:1030px;width:37px;height:15px;background:#a1a1a1"></div>
<div style="left:0px;top:1048.5px;width:40px;height:3px;background:#fafafa"></div>
<div style="left:0px;top:1051px;width:40px;height:87px;background:#f0f0f0"></div>
<svg width="0" height="0" style="left:0;top:0"><defs><linearGradient id="bgA" x1="0" y1="0" x2="1" y2="0"><stop offset="0" stop-color="#c9ebf8"/><stop offset=".34" stop-color="#c2e8f6"/><stop offset=".46" stop-color="#a6dcf1"/><stop offset=".58" stop-color="#78caea"/><stop offset=".72" stop-color="#66c2e7"/><stop offset="1" stop-color="#6ec7e9"/></linearGradient><linearGradient id="bgB" x1="0" y1="0" x2="0" y2="1"><stop offset="0" stop-color="#14aadc" stop-opacity="0"/><stop offset=".28" stop-color="#14aadc" stop-opacity=".06"/><stop offset=".42" stop-color="#14aadc" stop-opacity=".4"/><stop offset=".58" stop-color="#14aadc" stop-opacity=".75"/><stop offset=".74" stop-color="#14aadc" stop-opacity="1"/></linearGradient><radialGradient id="bY" cx=".42" cy=".38" r=".7"><stop offset="0" stop-color="#f5f3a0"/><stop offset=".5" stop-color="#ebe85e"/><stop offset="1" stop-color="#c6c632"/></radialGradient><radialGradient id="bP" cx=".5" cy=".35" r=".75"><stop offset="0" stop-color="#f0c8ea"/><stop offset=".6" stop-color="#dca8dc"/><stop offset="1" stop-color="#c48ccc"/></radialGradient><radialGradient id="bV" cx=".5" cy=".3" r=".8"><stop offset="0" stop-color="#a890e0"/><stop offset=".7" stop-color="#8a6cc8"/><stop offset="1" stop-color="#6a50a8"/></radialGradient><symbol id="photo" viewBox="0 0 346.6 237.6" preserveAspectRatio="none"><rect width="346.6" height="237.6" fill="url(#bgA)"/><rect x="150" width="196.60000000000002" height="237.6" fill="url(#bgB)"/><circle cx="142.0" cy="57.7" r="2.3" fill="#ffd0a0"/><circle cx="130.9" cy="60.4" r="0.9" fill="#fce4ec"/><circle cx="139.6" cy="55.5" r="0.9" fill="#ffd0a0"/><circle cx="160.4" cy="58.2" r="2.0" fill="#ffffff"/><circle cx="148.7" cy="45.4" r="1.4" fill="#f6b8c8"/><circle cx="139.8" cy="35.7" r="0.6" fill="#ffffff"/><circle cx="167.4" cy="61.8" r="0.6" fill="#ffd0a0"/><circle cx="152.3" cy="68.2" r="0.9" fill="#ffe680"/><circle cx="150.1" cy="41.0" r="1.8" fill="#ffd0a0"/><circle cx="153.0" cy="41.8" r="1.5" fill="#f6b8c8"/><circle cx="158.9" cy="41.9" r="0.9" fill="#ffffff"/><circle cx="184.3" cy="55.9" r="0.7" fill="#f6b8c8"/><circle cx="172.4" cy="42.2" r="2.3" fill="#ffffff"/><circle cx="171.6" cy="81.8" r="0.6" fill="#b8e8a0"/><circle cx="179.8" cy="51.2" r="0.6" fill="#ffe680"/><circle cx="165.2" cy="42.7" r="0.7" fill="#f49ab0"/><circle cx="180.2" cy="54.1" r="2.3" fill="#f6b8c8"/><circle cx="163.0" cy="58.8" r="0.6" fill="#ffd0a0"/><circle cx="172.4" cy="67.8" r="1.4" fill="#ffe680"/><circle cx="191.8" cy="50.7" r="1.3" fill="#b8e8a0"/><circle cx="176.0" cy="61.9" r="0.9" fill="#ffffff"/><circle cx="193.2" cy="26.2" r="1.6" fill="#ffffff"/><circle cx="167.0" cy="65.4" r="2.1" fill="#f6b8c8"/><circle cx="172.0" cy="54.7" r="1.3" fill="#ffffff"/><circle cx="165.0" cy="41.3" r="1.1" fill="#f6b8c8"/><circle cx="173.2" cy="56.8" r="1.7" fill="#ffffff"/><circle cx="149.6" cy="45.4" r="1.4" fill="#ffd0a0"/><circle cx="167.3" cy="46.7" r="1.2" fill="#f6b8c8"/><circle cx="158.2" cy="61.5" r="1.7" fill="#ffe680"/><circle cx="175.8" cy="68.2" r="1.6" fill="#b8e8a0"/><circle cx="179.9" cy="40.9" r="1.3" fill="#f6b8c8"/><circle cx="178.6" cy="62.7" r="1.0" fill="#b8e8a0"/><circle cx="161.4" cy="77.0" r="1.6" fill="#ffffff"/><circle cx="124.0" cy="49.0" r="2.4" fill="#f6b8c8"/><circle cx="165.7" cy="69.3" r="2.1" fill="#f6b8c8"/><circle cx="155.6" cy="81.3" r="0.9" fill="#ffffff"/><circle cx="178.7" cy="58.4" r="1.0" fill="#ffffff"/><circle cx="170.1" cy="64.0" r="1.6" fill="#f6b8c8"/><circle cx="170.6" cy="56.7" r="1.4" fill="#f49ab0"/><circle cx="148.4" cy="36.2" r="1.6" fill="#f6b8c8"/><circle cx="130.2" cy="37.0" r="1.4" fill="#f49ab0"/><circle cx="149.6" cy="21.0" r="0.5" fill="#f6b8c8"/><circle cx="135.4" cy="55.1" r="1.1" fill="#f6b8c8"/><circle cx="181.8" cy="60.2" r="1.9" fill="#f6b8c8"/><circle cx="172.9" cy="25.0" r="1.2" fill="#ffd0a0"/><circle cx="190.7" cy="37.4" r="1.3" fill="#ffffff"/><circle cx="177.3" cy="40.0" r="1.7" fill="#b8e8a0"/><circle cx="160.8" cy="54.2" r="0.6" fill="#f6b8c8"/><circle cx="128.3" cy="21.2" r="2.2" fill="#f49ab0"/><circle cx="141.6" cy="66.5" r="1.6" fill="#ffd0a0"/><circle cx="142.2" cy="56.6" r="1.5" fill="#fce4ec"/><circle cx="185.5" cy="56.1" r="1.4" fill="#ffe680"/><circle cx="170.8" cy="51.1" r="2.0" fill="#ffd0a0"/><circle cx="162.7" cy="54.8" r="1.1" fill="#ffe680"/><circle cx="134.5" cy="50.3" r="1.2" fill="#ffd0a0"/><circle cx="150.2" cy="52.9" r="1.3" fill="#ffffff"/><circle cx="168.5" cy="65.9" r="2.0" fill="#ffe680"/><circle cx="175.0" cy="44.0" r="1.6" fill="#f49ab0"/><circle cx="165.1" cy="59.6" r="1.2" fill="#ffffff"/><circle cx="152.8" cy="21.9" r="1.0" fill="#f6b8c8"/><circle cx="177.4" cy="62.4" r="2.3" fill="#b8e8a0"/><circle cx="147.6" cy="63.4" r="1.8" fill="#ffd0a0"/><circle cx="149.1" cy="74.9" r="1.0" fill="#ffffff"/><circle cx="156.8" cy="43.3" r="1.2" fill="#ffffff"/><circle cx="151.8" cy="42.5" r="0.9" fill="#ffffff"/><circle cx="163.5" cy="59.9" r="0.6" fill="#f6b8c8"/><circle cx="140.2" cy="58.8" r="1.7" fill="#f49ab0"/><circle cx="187.7" cy="47.7" r="0.9" fill="#ffd0a0"/><circle cx="161.8" cy="73.4" r="1.9" fill="#fce4ec"/><circle cx="160.4" cy="44.8" r="1.0" fill="#f49ab0"/><circle cx="122.9" cy="45.0" r="1.5" fill="#f6b8c8"/><circle cx="139.2" cy="67.1" r="2.2" fill="#f6b8c8"/><circle cx="132.4" cy="67.4" r="1.2" fill="#ffd0a0"/><circle cx="140.0" cy="58.0" r="2.2" fill="#b8e8a0"/><circle cx="139.3" cy="47.0" r="1.5" fill="#f49ab0"/><circle cx="138.8" cy="57.1" r="0.9" fill="#f6b8c8"/><circle cx="171.1" cy="80.0" r="2.4" fill="#ffffff"/><circle cx="133.5" cy="47.5" r="1.1" fill="#ffffff"/><circle cx="158.7" cy="57.2" r="1.3" fill="#fce4ec"/><circle cx="150.8" cy="57.7" r="2.2" fill="#ffe680"/><circle cx="165.0" cy="48.4" r="2.0" fill="#f6b8c8"/><circle cx="137.5" cy="48.7" r="2.2" fill="#ffd0a0"/><circle cx="175.0" cy="65.4" r="1.9" fill="#ffd0a0"/><circle cx="181.5" cy="47.7" r="2.3" fill="#f6b8c8"/><circle cx="163.7" cy="38.8" r="1.6" fill="#fce4ec"/><circle cx="149.5" cy="40.7" r="2.1" fill="#fce4ec"/><circle cx="161.8" cy="72.2" r="2.3" fill="#ffe680"/><circle cx="159.7" cy="59.6" r="1.5" fill="#ffffff"/><circle cx="152.6" cy="48.9" r="1.5" fill="#fce4ec"/><circle cx="179.3" cy="53.2" r="1.5" fill="#ffffff"/><circle cx="145.7" cy="51.5" r="2.0" fill="#f6b8c8"/><circle cx="136.8" cy="53.9" r="0.6" fill="#fce4ec"/><circle cx="125.8" cy="60.3" r="2.0" fill="#b8e8a0"/><circle cx="160.5" cy="67.4" r="0.7" fill="#b8e8a0"/><circle cx="195.2" cy="35.0" r="2.2" fill="#fce4ec"/><circle cx="158.3" cy="60.5" r="1.7" fill="#ffffff"/><circle cx="183.1" cy="69.2" r="0.5" fill="#ffe680"/><circle cx="164.3" cy="54.5" r="1.0" fill="#f49ab0"/><circle cx="163.5" cy="68.1" r="1.4" fill="#f6b8c8"/><circle cx="177.0" cy="38.2" r="1.9" fill="#fce4ec"/><circle cx="165.5" cy="50.9" r="1.7" fill="#fce4ec"/><circle cx="147.0" cy="42.1" r="2.1" fill="#fce4ec"/><circle cx="149.3" cy="40.6" r="2.1" fill="#f6b8c8"/><circle cx="165.8" cy="74.0" r="2.0" fill="#f6b8c8"/><circle cx="156.9" cy="63.2" r="2.3" fill="#ffe680"/><circle cx="164.8" cy="44.4" r="0.7" fill="#ffe680"/><circle cx="167.7" cy="56.9" r="1.2" fill="#b8e8a0"/><circle cx="171.6" cy="41.0" r="2.0" fill="#f6b8c8"/><circle cx="170.1" cy="70.2" r="2.0" fill="#f6b8c8"/><circle cx="170.6" cy="71.6" r="2.2" fill="#f49ab0"/><circle cx="177.9" cy="63.0" r="1.9" fill="#fce4ec"/><circle cx="195.0" cy="52.6" r="2.0" fill="#ffd0a0"/><circle cx="166.5" cy="55.0" r="1.5" fill="#fce4ec"/><circle cx="178.9" cy="44.4" r="0.9" fill="#f6b8c8"/><circle cx="172.1" cy="76.7" r="2.4" fill="#f6b8c8"/><circle cx="154.8" cy="49.4" r="1.8" fill="#f6b8c8"/><circle cx="164.2" cy="41.3" r="1.4" fill="#fce4ec"/><circle cx="155.7" cy="59.9" r="1.2" fill="#ffffff"/><circle cx="168.8" cy="46.0" r="1.4" fill="#f49ab0"/><circle cx="153.5" cy="57.6" r="0.8" fill="#fce4ec"/><circle cx="166.8" cy="41.7" r="0.7" fill="#b8e8a0"/><circle cx="152.8" cy="49.2" r="1.6" fill="#f49ab0"/><circle cx="167.2" cy="43.3" r="2.2" fill="#f6b8c8"/><circle cx="169.7" cy="40.6" r="2.2" fill="#fce4ec"/><circle cx="152.9" cy="31.9" r="2.0" fill="#b8e8a0"/><circle cx="165.7" cy="60.8" r="2.0" fill="#ffffff"/><circle cx="160.4" cy="53.2" r="1.2" fill="#ffffff"/><circle cx="167.4" cy="83.9" r="1.8" fill="#f49ab0"/><circle cx="166.5" cy="65.8" r="0.8" fill="#f6b8c8"/><circle cx="107.1" cy="88.2" r="1.7" fill="#f6b8c8"/><circle cx="166.3" cy="16.5" r="0.5" fill="#f6b8c8"/><circle cx="161.9" cy="42.8" r="1.3" fill="#ffffff"/><circle cx="164.5" cy="34.1" r="0.5" fill="#ffffff"/><circle cx="162.6" cy="81.0" r="1.5" fill="#fce4ec"/><circle cx="145.0" cy="60.8" r="2.1" fill="#f6b8c8"/><circle cx="142.8" cy="34.7" r="0.6" fill="#ffffff"/><circle cx="132.4" cy="72.9" r="1.2" fill="#f6b8c8"/><circle cx="175.9" cy="40.0" r="1.6" fill="#b8e8a0"/><circle cx="179.5" cy="48.2" r="1.5" fill="#ffffff"/><circle cx="153.5" cy="60.8" r="1.7" fill="#fce4ec"/><circle cx="185.5" cy="44.6" r="1.9" fill="#ffffff"/><circle cx="175.5" cy="53.7" r="0.6" fill="#f6b8c8"/><circle cx="141.1" cy="63.5" r="0.6" fill="#f49ab0"/><circle cx="162.7" cy="48.6" r="2.4" fill="#f49ab0"/><circle cx="195.9" cy="65.4" r="1.3" fill="#ffd0a0"/><circle cx="162.6" cy="74.6" r="0.6" fill="#f6b8c8"/><circle cx="187.9" cy="44.8" r="1.4" fill="#ffe680"/><circle cx="156.1" cy="48.9" r="1.7" fill="#ffd0a0"/><circle cx="187.7" cy="70.2" r="1.2" fill="#f6b8c8"/><circle cx="175.9" cy="62.7" r="1.8" fill="#ffd0a0"/><circle cx="143.2" cy="41.8" r="1.8" fill="#f49ab0"/><circle cx="166.5" cy="37.1" r="2.4" fill="#ffffff"/><circle cx="161.6" cy="43.3" r="0.7" fill="#ffffff"/><circle cx="167.9" cy="35.0" r="1.2" fill="#ffffff"/><circle cx="141.7" cy="39.5" r="1.8" fill="#ffe680"/><circle cx="143.7" cy="36.7" r="0.9" fill="#ffe680"/><circle cx="138.1" cy="52.5" r="0.9" fill="#ffffff"/><circle cx="161.2" cy="51.5" r="1.0" fill="#ffffff"/><circle cx="157.2" cy="48.6" r="1.5" fill="#f6b8c8"/><circle cx="164.2" cy="24.1" r="0.8" fill="#ffe680"/><circle cx="151.6" cy="43.6" r="1.4" fill="#ffe680"/><circle cx="152.3" cy="65.7" r="0.8" fill="#f6b8c8"/><circle cx="168.8" cy="39.4" r="2.1" fill="#ffe680"/><circle cx="136.3" cy="60.2" r="1.2" fill="#f6b8c8"/><circle cx="146.0" cy="66.7" r="2.4" fill="#f49ab0"/><circle cx="155.5" cy="74.0" r="2.1" fill="#f6b8c8"/><circle cx="148.1" cy="58.3" r="0.7" fill="#f49ab0"/><circle cx="169.0" cy="55.4" r="1.6" fill="#ffd0a0"/><circle cx="170.4" cy="39.5" r="2.1" fill="#ffffff"/><circle cx="173.3" cy="56.9" r="1.8" fill="#f6b8c8"/><circle cx="156.1" cy="38.5" r="2.0" fill="#f49ab0"/><circle cx="160.9" cy="59.9" r="1.2" fill="#f49ab0"/><circle cx="157.1" cy="57.6" r="1.8" fill="#ffffff"/><circle cx="134.5" cy="61.7" r="1.1" fill="#f49ab0"/><circle cx="170.8" cy="86.3" r="1.9" fill="#fce4ec"/><circle cx="163.0" cy="65.1" r="1.2" fill="#f49ab0"/><circle cx="152.8" cy="37.3" r="2.0" fill="#f49ab0"/><circle cx="169.0" cy="37.3" r="2.1" fill="#f6b8c8"/><circle cx="175.6" cy="72.4" r="2.2" fill="#ffffff"/><circle cx="167.4" cy="44.3" r="0.6" fill="#f6b8c8"/><circle cx="122.4" cy="38.9" r="1.7" fill="#b8e8a0"/><circle cx="182.5" cy="59.2" r="2.0" fill="#f6b8c8"/><circle cx="155.9" cy="61.8" r="0.7" fill="#f49ab0"/><circle cx="183.6" cy="62.2" r="0.8" fill="#b8e8a0"/><circle cx="163.1" cy="62.0" r="2.0" fill="#fce4ec"/><circle cx="152.9" cy="65.1" r="1.2" fill="#f49ab0"/><circle cx="153.5" cy="39.4" r="1.5" fill="#f6b8c8"/><circle cx="153.0" cy="24.9" r="1.3" fill="#f49ab0"/><circle cx="181.4" cy="34.1" r="2.1" fill="#ffd0a0"/><circle cx="186.3" cy="47.9" r="1.5" fill="#ffffff"/><circle cx="168.5" cy="39.9" r="1.3" fill="#f6b8c8"/><circle cx="163.1" cy="60.5" r="1.7" fill="#f6b8c8"/><circle cx="155.5" cy="64.5" r="1.5" fill="#ffffff"/><circle cx="168.6" cy="51.9" r="1.1" fill="#f6b8c8"/><circle cx="159.5" cy="59.9" r="2.2" fill="#ffffff"/><circle cx="162.9" cy="50.4" r="1.4" fill="#ffffff"/><circle cx="158.5" cy="60.8" r="1.2" fill="#ffe680"/><circle cx="147.3" cy="44.2" r="1.5" fill="#ffd0a0"/><circle cx="168.3" cy="62.5" r="0.8" fill="#ffffff"/><circle cx="134.4" cy="30.6" r="1.5" fill="#ffffff"/><circle cx="145.6" cy="54.1" r="2.3" fill="#fce4ec"/><circle cx="163.8" cy="47.1" r="2.1" fill="#b8e8a0"/><circle cx="202.1" cy="62.5" r="2.0" fill="#b8e8a0"/><circle cx="192.7" cy="49.3" r="2.0" fill="#ffffff"/><circle cx="155.9" cy="44.8" r="0.5" fill="#ffd0a0"/><circle cx="178.2" cy="44.8" r="1.0" fill="#b8e8a0"/><circle cx="155.0" cy="48.1" r="0.8" fill="#f49ab0"/><circle cx="185.6" cy="75.2" r="2.0" fill="#f6b8c8"/><circle cx="127.8" cy="21.7" r="1.0" fill="#fce4ec"/><circle cx="183.7" cy="58.3" r="0.8" fill="#ffe680"/><circle cx="177.1" cy="30.1" r="2.1" fill="#f6b8c8"/><circle cx="148.8" cy="67.2" r="1.5" fill="#ffd0a0"/><circle cx="160.4" cy="47.7" r="1.9" fill="#fce4ec"/><circle cx="171.8" cy="44.2" r="2.0" fill="#b8e8a0"/><circle cx="171.8" cy="71.2" r="2.0" fill="#ffd0a0"/><circle cx="168.3" cy="68.5" r="1.5" fill="#f6b8c8"/><circle cx="204.2" cy="41.8" r="1.1" fill="#b8e8a0"/><circle cx="175.7" cy="57.9" r="1.4" fill="#f6b8c8"/><circle cx="146.3" cy="68.1" r="0.7" fill="#b8e8a0"/><circle cx="150.1" cy="33.6" r="2.0" fill="#f6b8c8"/><circle cx="161.3" cy="51.1" r="1.2" fill="#ffd0a0"/><circle cx="164.5" cy="69.5" r="1.4" fill="#ffffff"/><circle cx="183.1" cy="33.1" r="1.9" fill="#f6b8c8"/><circle cx="158.7" cy="65.0" r="1.5" fill="#ffffff"/><circle cx="190.1" cy="46.6" r="1.6" fill="#f6b8c8"/><circle cx="162.3" cy="61.5" r="1.9" fill="#f49ab0"/><circle cx="157.8" cy="62.5" r="1.4" fill="#f49ab0"/><circle cx="147.0" cy="57.0" r="0.7" fill="#f6b8c8"/><circle cx="179.1" cy="66.3" r="0.8" fill="#ffe680"/><circle cx="136.3" cy="67.1" r="1.6" fill="#f6b8c8"/><circle cx="278.1" cy="18.0" r="2.0" fill="#b8e8a0"/><circle cx="269.6" cy="18.5" r="1.9" fill="#b8e8a0"/><circle cx="282.6" cy="14.9" r="0.8" fill="#f6b8c8"/><circle cx="281.6" cy="9.7" r="1.0" fill="#b8e8a0"/><circle cx="256.3" cy="7.8" r="1.4" fill="#f49ab0"/><circle cx="302.9" cy="15.2" r="1.5" fill="#fce4ec"/><circle cx="289.0" cy="17.6" r="1.0" fill="#ffd0a0"/><circle cx="287.0" cy="21.6" r="1.3" fill="#ffffff"/><circle cx="284.8" cy="7.0" r="0.7" fill="#fce4ec"/><circle cx="291.3" cy="11.0" r="1.0" fill="#fce4ec"/><circle cx="254.0" cy="15.9" r="0.8" fill="#fce4ec"/><circle cx="299.9" cy="16.7" r="1.9" fill="#ffffff"/><circle cx="267.4" cy="13.0" r="0.6" fill="#ffe680"/><circle cx="258.3" cy="18.0" r="1.0" fill="#f6b8c8"/><circle cx="288.5" cy="13.5" r="1.2" fill="#f6b8c8"/><circle cx="250.1" cy="20.6" r="0.9" fill="#fce4ec"/><circle cx="269.2" cy="16.0" r="1.9" fill="#f6b8c8"/><circle cx="316.7" cy="3.4" r="1.7" fill="#f6b8c8"/><circle cx="296.2" cy="27.2" r="0.9" fill="#f49ab0"/><circle cx="276.0" cy="27.2" r="1.7" fill="#f6b8c8"/><circle cx="250.9" cy="8.4" r="1.2" fill="#b8e8a0"/><circle cx="294.9" cy="38.1" r="1.9" fill="#f6b8c8"/><circle cx="266.3" cy="28.0" r="1.6" fill="#b8e8a0"/><circle cx="257.7" cy="9.2" r="1.6" fill="#f6b8c8"/><circle cx="280.4" cy="25.3" r="0.7" fill="#b8e8a0"/><circle cx="286.8" cy="22.3" r="1.0" fill="#f6b8c8"/><circle cx="273.0" cy="27.1" r="1.0" fill="#ffffff"/><circle cx="269.8" cy="2.9" r="1.1" fill="#ffd0a0"/><circle cx="260.2" cy="11.5" r="1.1" fill="#b8e8a0"/><circle cx="275.0" cy="7.6" r="2.0" fill="#b8e8a0"/><circle cx="278.4" cy="13.2" r="0.7" fill="#fce4ec"/><circle cx="265.4" cy="25.3" r="1.1" fill="#ffffff"/><circle cx="272.5" cy="19.2" r="1.6" fill="#b8e8a0"/><circle cx="272.4" cy="6.1" r="1.6" fill="#ffffff"/><circle cx="299.0" cy="5.8" r="0.9" fill="#ffd0a0"/><circle cx="276.4" cy="33.0" r="2.0" fill="#ffd0a0"/><circle cx="268.2" cy="7.6" r="0.9" fill="#ffffff"/><circle cx="253.8" cy="1.0" r="1.8" fill="#f49ab0"/><circle cx="286.0" cy="10.6" r="1.7" fill="#ffe680"/><circle cx="264.9" cy="10.0" r="0.7" fill="#f6b8c8"/><circle cx="297.9" cy="25.0" r="0.7" fill="#fce4ec"/><circle cx="259.2" cy="12.8" r="0.9" fill="#ffffff"/><circle cx="284.5" cy="17.5" r="1.2" fill="#ffd0a0"/><circle cx="281.2" cy="9.4" r="1.0" fill="#ffe680"/><circle cx="278.7" cy="17.4" r="1.8" fill="#ffffff"/><circle cx="270.8" cy="20.8" r="1.7" fill="#ffd0a0"/><circle cx="282.6" cy="13.1" r="1.8" fill="#ffffff"/><circle cx="285.0" cy="31.2" r="1.0" fill="#ffd0a0"/><circle cx="297.4" cy="17.9" r="1.5" fill="#fce4ec"/><circle cx="281.5" cy="27.6" r="0.8" fill="#ffffff"/><circle cx="266.8" cy="11.3" r="1.7" fill="#ffffff"/><circle cx="292.1" cy="7.6" r="0.7" fill="#ffd0a0"/><circle cx="266.4" cy="19.3" r="1.8" fill="#f6b8c8"/><circle cx="272.2" cy="11.7" r="0.8" fill="#ffe680"/><circle cx="261.4" cy="16.7" r="0.9" fill="#fce4ec"/><circle cx="290.8" cy="9.7" r="0.8" fill="#ffffff"/><circle cx="282.8" cy="13.7" r="0.8" fill="#f6b8c8"/><circle cx="270.4" cy="14.1" r="2.0" fill="#ffd0a0"/><circle cx="280.2" cy="15.2" r="1.9" fill="#ffffff"/><circle cx="264.2" cy="13.0" r="0.9" fill="#f6b8c8"/><circle cx="223.4" cy="70.8" r="0.7" fill="#f6b8c8"/><circle cx="184.8" cy="49.6" r="0.7" fill="#f6b8c8"/><circle cx="195.5" cy="29.5" r="1.0" fill="#b8e8a0"/><circle cx="236.2" cy="30.4" r="0.6" fill="#f6b8c8"/><circle cx="160.1" cy="21.9" r="0.9" fill="#ffd0a0"/><circle cx="195.3" cy="10.9" r="1.1" fill="#fce4ec"/><circle cx="188.8" cy="10.1" r="1.2" fill="#f6b8c8"/><circle cx="207.7" cy="40.9" r="1.2" fill="#fce4ec"/><circle cx="195.4" cy="2.0" r="1.4" fill="#ffe680"/><circle cx="188.1" cy="49.8" r="1.4" fill="#ffd0a0"/><circle cx="188.7" cy="40.5" r="1.6" fill="#ffffff"/><circle cx="149.7" cy="15.5" r="0.7" fill="#f6b8c8"/><circle cx="166.4" cy="16.0" r="1.4" fill="#fce4ec"/><circle cx="173.8" cy="34.3" r="1.4" fill="#f6b8c8"/><circle cx="200.2" cy="36.4" r="1.2" fill="#ffe680"/><circle cx="184.6" cy="26.1" r="1.0" fill="#f49ab0"/><circle cx="205.1" cy="6.1" r="1.4" fill="#ffd0a0"/><circle cx="224.4" cy="45.5" r="0.7" fill="#ffffff"/><circle cx="190.1" cy="48.6" r="1.2" fill="#ffd0a0"/><circle cx="210.8" cy="36.0" r="0.9" fill="#ffe680"/><circle cx="215.3" cy="49.2" r="1.2" fill="#f6b8c8"/><circle cx="204.7" cy="43.7" r="1.3" fill="#ffffff"/><circle cx="212.4" cy="30.1" r="1.1" fill="#f6b8c8"/><circle cx="175.3" cy="38.2" r="1.0" fill="#f6b8c8"/><circle cx="222.5" cy="25.5" r="1.3" fill="#ffe680"/><circle cx="186.7" cy="37.5" r="1.4" fill="#b8e8a0"/><circle cx="140.2" cy="38.7" r="0.9" fill="#f49ab0"/><circle cx="236.8" cy="17.8" r="0.7" fill="#f6b8c8"/><circle cx="163.7" cy="43.1" r="0.6" fill="#f49ab0"/><circle cx="145.6" cy="15.3" r="1.5" fill="#f6b8c8"/><circle cx="168.4" cy="33.5" r="1.4" fill="#b8e8a0"/><circle cx="184.7" cy="33.3" r="1.0" fill="#ffe680"/><circle cx="201.1" cy="48.3" r="0.7" fill="#ffe680"/><circle cx="165.9" cy="42.4" r="1.3" fill="#ffd0a0"/><circle cx="124.0" cy="46.3" r="1.2" fill="#ffd0a0"/><circle cx="195.9" cy="44.9" r="0.6" fill="#ffffff"/><circle cx="178.3" cy="39.5" r="0.5" fill="#f6b8c8"/><circle cx="188.4" cy="10.7" r="1.1" fill="#ffe680"/><circle cx="187.4" cy="44.8" r="0.7" fill="#f49ab0"/><circle cx="200.4" cy="38.8" r="1.4" fill="#f6b8c8"/><circle cx="209.0" cy="31.6" r="0.9" fill="#f6b8c8"/><circle cx="203.0" cy="17.4" r="0.8" fill="#fce4ec"/><circle cx="180.7" cy="17.9" r="1.2" fill="#ffd0a0"/><circle cx="202.0" cy="32.1" r="1.2" fill="#ffffff"/><circle cx="195.6" cy="45.7" r="1.0" fill="#f6b8c8"/><circle cx="162.2" cy="27.7" r="0.8" fill="#ffd0a0"/><circle cx="183.6" cy="22.0" r="0.7" fill="#ffffff"/><circle cx="166.3" cy="26.0" r="0.7" fill="#fce4ec"/><circle cx="200.3" cy="21.3" r="0.8" fill="#f49ab0"/><circle cx="180.5" cy="24.1" r="1.4" fill="#ffd0a0"/><circle cx="153.2" cy="18.1" r="1.6" fill="#ffffff"/><circle cx="185.4" cy="24.8" r="1.4" fill="#fce4ec"/><circle cx="177.6" cy="7.8" r="1.6" fill="#f49ab0"/><circle cx="192.8" cy="52.3" r="0.6" fill="#b8e8a0"/><circle cx="208.5" cy="42.5" r="1.0" fill="#f49ab0"/><circle cx="182.4" cy="54.2" r="0.7" fill="#b8e8a0"/><circle cx="201.0" cy="55.9" r="0.9" fill="#ffe680"/><circle cx="153.8" cy="26.4" r="1.5" fill="#f6b8c8"/><circle cx="173.0" cy="31.5" r="1.4" fill="#ffffff"/><circle cx="188.3" cy="26.5" r="0.9" fill="#f49ab0"/><circle cx="230.7" cy="10.8" r="0.8" fill="#b8e8a0"/><circle cx="160.6" cy="30.4" r="1.0" fill="#f49ab0"/><circle cx="196.2" cy="25.7" r="0.5" fill="#f49ab0"/><circle cx="211.9" cy="16.8" r="0.8" fill="#f6b8c8"/><circle cx="176.2" cy="17.5" r="0.9" fill="#f49ab0"/><circle cx="223.6" cy="34.7" r="0.7" fill="#f6b8c8"/><circle cx="168.5" cy="13.8" r="1.0" fill="#b8e8a0"/><circle cx="197.4" cy="32.1" r="1.0" fill="#ffd0a0"/><circle cx="154.3" cy="53.5" r="0.5" fill="#f6b8c8"/><circle cx="182.7" cy="18.1" r="1.0" fill="#ffd0a0"/><circle cx="202.2" cy="28.5" r="0.7" fill="#ffe680"/><circle cx="189.0" cy="41.1" r="1.1" fill="#fce4ec"/><circle cx="191.6" cy="29.6" r="1.1" fill="#fce4ec"/><circle cx="225.8" cy="44.0" r="1.5" fill="#f49ab0"/><circle cx="188.9" cy="37.3" r="0.5" fill="#ffe680"/><circle cx="178.5" cy="6.8" r="1.6" fill="#f6b8c8"/><circle cx="206.3" cy="48.6" r="1.0" fill="#ffffff"/><circle cx="177.5" cy="39.4" r="1.3" fill="#fce4ec"/><circle cx="158.1" cy="30.0" r="0.9" fill="#f6b8c8"/><circle cx="221.0" cy="16.8" r="1.5" fill="#f6b8c8"/><circle cx="174.0" cy="58.7" r="1.1" fill="#ffd0a0"/><circle cx="219.5" cy="35.4" r="1.0" fill="#ffd0a0"/><circle cx="205.7" cy="33.8" r="1.1" fill="#b8e8a0"/><circle cx="189.2" cy="52.5" r="0.9" fill="#f49ab0"/><circle cx="207.4" cy="58.6" r="0.7" fill="#f6b8c8"/><circle cx="168.9" cy="22.9" r="1.3" fill="#ffffff"/><circle cx="193.4" cy="21.9" r="0.9" fill="#ffffff"/><circle cx="191.5" cy="40.0" r="0.5" fill="#f6b8c8"/><circle cx="133.4" cy="42.4" r="0.7" fill="#b8e8a0"/><circle cx="116.5" cy="45.6" r="0.6" fill="#f6b8c8"/><circle cx="133.0" cy="22.0" r="0.5" fill="#ffffff"/><circle cx="122.5" cy="45.4" r="1.0" fill="#b8e8a0"/><circle cx="133.0" cy="33.0" r="0.8" fill="#ffd0a0"/><circle cx="137.6" cy="35.1" r="0.8" fill="#ffffff"/><circle cx="139.0" cy="55.0" r="0.7" fill="#f6b8c8"/><circle cx="150.6" cy="27.9" r="0.9" fill="#fce4ec"/><circle cx="128.2" cy="61.2" r="0.8" fill="#f6b8c8"/><circle cx="102.8" cy="18.0" r="1.0" fill="#b8e8a0"/><circle cx="145.1" cy="39.5" r="0.5" fill="#f6b8c8"/><circle cx="132.4" cy="45.8" r="0.7" fill="#f6b8c8"/><circle cx="119.6" cy="31.5" r="0.7" fill="#ffffff"/><circle cx="135.9" cy="31.4" r="1.0" fill="#f6b8c8"/><circle cx="149.3" cy="30.2" r="0.6" fill="#ffe680"/><circle cx="151.2" cy="28.9" r="0.5" fill="#f49ab0"/><circle cx="140.4" cy="14.8" r="0.5" fill="#fce4ec"/><circle cx="112.5" cy="9.7" r="0.7" fill="#ffe680"/><circle cx="164.5" cy="17.8" r="1.1" fill="#ffd0a0"/><circle cx="100.5" cy="13.3" r="0.5" fill="#ffffff"/><circle cx="153.5" cy="23.0" r="0.9" fill="#ffffff"/><circle cx="117.9" cy="50.5" r="0.7" fill="#fce4ec"/><circle cx="102.2" cy="36.9" r="0.5" fill="#f49ab0"/><circle cx="154.3" cy="31.2" r="1.0" fill="#ffd0a0"/><circle cx="111.5" cy="46.9" r="1.0" fill="#f6b8c8"/><circle cx="151.7" cy="22.6" r="1.0" fill="#b8e8a0"/><circle cx="134.7" cy="64.9" r="0.5" fill="#f6b8c8"/><circle cx="137.1" cy="45.5" r="0.7" fill="#ffffff"/><circle cx="140.5" cy="15.7" r="0.9" fill="#f49ab0"/><circle cx="132.5" cy="35.3" r="0.9" fill="#f6b8c8"/><circle cx="133.8" cy="40.8" r="0.6" fill="#ffffff"/><circle cx="133.9" cy="9.7" r="0.9" fill="#f6b8c8"/><circle cx="129.5" cy="37.4" r="0.7" fill="#f6b8c8"/><circle cx="132.8" cy="30.7" r="0.8" fill="#b8e8a0"/><circle cx="167.3" cy="51.8" r="1.0" fill="#ffe680"/><circle cx="144.6" cy="31.1" r="0.5" fill="#f6b8c8"/><circle cx="122.4" cy="23.1" r="0.8" fill="#ffe680"/><circle cx="106.9" cy="29.9" r="1.0" fill="#ffffff"/><circle cx="149.2" cy="36.6" r="1.1" fill="#f6b8c8"/><circle cx="138.2" cy="10.6" r="0.5" fill="#b8e8a0"/><circle cx="139.4" cy="26.9" r="0.9" fill="#f49ab0"/><circle cx="158.8" cy="9.3" r="0.9" fill="#fce4ec"/><circle cx="170.5" cy="22.8" r="0.6" fill="#ffd0a0"/><circle cx="118.3" cy="36.8" r="1.0" fill="#fce4ec"/><circle cx="137.5" cy="51.3" r="0.8" fill="#fce4ec"/><circle cx="152.0" cy="20.3" r="0.8" fill="#ffffff"/><circle cx="116.9" cy="17.9" r="1.1" fill="#f6b8c8"/><circle cx="120.9" cy="26.5" r="0.7" fill="#f49ab0"/><circle cx="141.6" cy="46.5" r="0.8" fill="#ffffff"/><circle cx="140.4" cy="23.6" r="1.1" fill="#ffd0a0"/><circle cx="142.7" cy="36.4" r="1.1" fill="#f6b8c8"/><circle cx="148.5" cy="4.7" r="0.8" fill="#ffffff"/><circle cx="164.5" cy="42.6" r="0.9" fill="#ffffff"/><circle cx="120.1" cy="28.2" r="0.6" fill="#ffffff"/><circle cx="141.8" cy="21.9" r="0.7" fill="#ffe680"/><circle cx="153.0" cy="38.9" r="1.0" fill="#ffd0a0"/><circle cx="139.2" cy="25.5" r="0.8" fill="#ffffff"/><circle cx="137.4" cy="9.8" r="1.0" fill="#f6b8c8"/><circle cx="138.6" cy="20.5" r="0.7" fill="#f49ab0"/><circle cx="145.6" cy="26.7" r="0.7" fill="#b8e8a0"/><circle cx="305.5" cy="30.6" r="1.4" fill="#ffd0a0"/><circle cx="303.0" cy="17.1" r="1.6" fill="#ffe680"/><circle cx="272.6" cy="17.7" r="1.6" fill="#ffe680"/><circle cx="217.0" cy="5.6" r="0.9" fill="#f49ab0"/><circle cx="330.7" cy="13.9" r="0.7" fill="#ffe680"/><circle cx="300.5" cy="25.5" r="1.3" fill="#ffd0a0"/><circle cx="315.1" cy="22.3" r="0.8" fill="#f49ab0"/><circle cx="276.0" cy="12.6" r="0.7" fill="#f6b8c8"/><circle cx="279.6" cy="1.5" r="0.9" fill="#ffffff"/><circle cx="297.0" cy="11.8" r="0.6" fill="#ffffff"/><circle cx="251.9" cy="29.9" r="0.9" fill="#ffd0a0"/><circle cx="303.7" cy="24.4" r="0.6" fill="#fce4ec"/><circle cx="289.3" cy="11.4" r="1.1" fill="#ffffff"/><circle cx="332.8" cy="37.0" r="1.5" fill="#f6b8c8"/><circle cx="282.1" cy="8.0" r="1.5" fill="#b8e8a0"/><circle cx="303.3" cy="31.6" r="0.7" fill="#f6b8c8"/><circle cx="279.1" cy="27.8" r="1.1" fill="#ffffff"/><circle cx="284.1" cy="37.6" r="1.2" fill="#ffe680"/><circle cx="319.9" cy="20.9" r="1.2" fill="#ffffff"/><circle cx="278.8" cy="26.1" r="0.6" fill="#f6b8c8"/><circle cx="283.4" cy="18.2" r="1.5" fill="#f6b8c8"/><circle cx="296.0" cy="17.7" r="0.5" fill="#f49ab0"/><circle cx="342.5" cy="18.4" r="1.5" fill="#f6b8c8"/><circle cx="270.6" cy="22.0" r="1.0" fill="#f49ab0"/><circle cx="257.3" cy="22.0" r="0.6" fill="#ffe680"/><circle cx="256.2" cy="33.6" r="1.2" fill="#f6b8c8"/><circle cx="304.4" cy="19.7" r="1.0" fill="#b8e8a0"/><circle cx="260.6" cy="18.0" r="1.0" fill="#f6b8c8"/><circle cx="283.2" cy="19.3" r="1.4" fill="#ffffff"/><circle cx="313.6" cy="34.8" r="1.2" fill="#ffffff"/><circle cx="241.6" cy="23.9" r="1.0" fill="#f6b8c8"/><circle cx="346.1" cy="22.2" r="1.5" fill="#ffffff"/><circle cx="315.6" cy="27.6" r="1.1" fill="#f6b8c8"/><circle cx="296.7" cy="14.5" r="1.6" fill="#f6b8c8"/><circle cx="312.3" cy="23.5" r="1.2" fill="#fce4ec"/><circle cx="273.2" cy="19.0" r="1.4" fill="#ffe680"/><circle cx="270.3" cy="12.5" r="1.6" fill="#ffd0a0"/><circle cx="300.7" cy="24.7" r="0.7" fill="#f6b8c8"/><circle cx="306.1" cy="6.6" r="0.7" fill="#fce4ec"/><circle cx="311.5" cy="34.6" r="1.6" fill="#f6b8c8"/><circle cx="291.5" cy="20.7" r="0.7" fill="#f6b8c8"/><circle cx="290.8" cy="0.9" r="0.7" fill="#fce4ec"/><circle cx="275.3" cy="11.5" r="1.0" fill="#fce4ec"/><circle cx="263.4" cy="1.6" r="0.6" fill="#b8e8a0"/><circle cx="289.3" cy="27.7" r="1.1" fill="#b8e8a0"/><circle cx="280.5" cy="32.0" r="1.2" fill="#fce4ec"/><circle cx="326.6" cy="14.7" r="1.1" fill="#f6b8c8"/><circle cx="277.5" cy="26.0" r="1.3" fill="#ffffff"/><circle cx="296.8" cy="24.8" r="1.4" fill="#b8e8a0"/><circle cx="277.4" cy="29.7" r="1.0" fill="#ffffff"/><circle cx="282.8" cy="33.5" r="0.7" fill="#b8e8a0"/><circle cx="269.7" cy="16.2" r="0.7" fill="#f6b8c8"/><circle cx="293.3" cy="16.8" r="0.9" fill="#ffe680"/><circle cx="263.2" cy="18.0" r="1.3" fill="#f49ab0"/><circle cx="238.4" cy="37.1" r="0.5" fill="#f49ab0"/><circle cx="318.9" cy="17.0" r="1.2" fill="#f49ab0"/><circle cx="304.4" cy="12.8" r="1.3" fill="#ffffff"/><circle cx="282.7" cy="32.7" r="1.1" fill="#f49ab0"/><circle cx="305.6" cy="21.5" r="0.8" fill="#ffffff"/><circle cx="279.7" cy="10.5" r="0.6" fill="#f6b8c8"/><circle cx="306.2" cy="10.5" r="0.8" fill="#f6b8c8"/><circle cx="303.7" cy="3.1" r="0.6" fill="#ffd0a0"/><circle cx="329.6" cy="24.8" r="1.1" fill="#f49ab0"/><circle cx="291.2" cy="17.8" r="1.5" fill="#ffe680"/><circle cx="292.4" cy="19.2" r="1.3" fill="#b8e8a0"/><circle cx="276.2" cy="34.3" r="1.5" fill="#f6b8c8"/><circle cx="299.9" cy="24.2" r="1.3" fill="#f6b8c8"/><circle cx="274.4" cy="28.9" r="1.0" fill="#f6b8c8"/><circle cx="242.6" cy="28.5" r="1.3" fill="#f6b8c8"/><circle cx="318.3" cy="16.8" r="1.4" fill="#f6b8c8"/><circle cx="287.2" cy="8.2" r="1.3" fill="#fce4ec"/><circle cx="334.3" cy="35.6" r="0.6" fill="#f49ab0"/><circle cx="246.4" cy="14.6" r="0.6" fill="#ffffff"/><circle cx="288.3" cy="20.3" r="1.0" fill="#b8e8a0"/><circle cx="307.2" cy="37.6" r="1.0" fill="#b8e8a0"/><circle cx="285.2" cy="8.8" r="1.4" fill="#f6b8c8"/><circle cx="246.2" cy="12.6" r="1.4" fill="#f49ab0"/><circle cx="301.9" cy="30.4" r="0.7" fill="#f49ab0"/><circle cx="261.2" cy="34.9" r="1.3" fill="#ffd0a0"/><circle cx="250.2" cy="9.4" r="0.9" fill="#f6b8c8"/><circle cx="222.3" cy="23.9" r="0.9" fill="#ffd0a0"/><circle cx="296.9" cy="29.1" r="1.3" fill="#ffffff"/><circle cx="294.4" cy="24.2" r="1.4" fill="#b8e8a0"/><circle cx="295.6" cy="28.1" r="1.5" fill="#f6b8c8"/><circle cx="228.8" cy="7.8" r="1.5" fill="#ffd0a0"/><circle cx="285.0" cy="23.7" r="0.7" fill="#f6b8c8"/><circle cx="281.7" cy="7.0" r="0.7" fill="#f49ab0"/><circle cx="264.8" cy="13.5" r="0.9" fill="#f6b8c8"/><circle cx="229.5" cy="30.3" r="0.9" fill="#ffffff"/><circle cx="332.0" cy="31.9" r="0.7" fill="#ffe680"/><circle cx="322.1" cy="4.8" r="0.9" fill="#f6b8c8"/><circle cx="298.0" cy="4.0" r="1.5" fill="#f49ab0"/><circle cx="285.6" cy="9.2" r="1.5" fill="#ffffff"/><circle cx="256.7" cy="5.6" r="1.6" fill="#f6b8c8"/><circle cx="294.8" cy="22.2" r="1.1" fill="#ffffff"/><circle cx="284.2" cy="11.2" r="1.1" fill="#ffffff"/><circle cx="274.1" cy="20.7" r="0.8" fill="#ffffff"/><circle cx="308.8" cy="17.4" r="0.9" fill="#fce4ec"/><circle cx="316.6" cy="6.8" r="1.1" fill="#f6b8c8"/><circle cx="257.5" cy="16.0" r="1.5" fill="#ffffff"/><circle cx="285.3" cy="31.7" r="1.4" fill="#fce4ec"/><circle cx="297.8" cy="32.9" r="0.9" fill="#ffe680"/><circle cx="323.7" cy="14.9" r="1.1" fill="#f49ab0"/><circle cx="302.5" cy="16.7" r="1.1" fill="#f6b8c8"/><circle cx="294.2" cy="20.6" r="1.5" fill="#f6b8c8"/><circle cx="303.2" cy="30.6" r="0.9" fill="#f6b8c8"/><circle cx="330.5" cy="26.5" r="0.6" fill="#ffffff"/><circle cx="282.4" cy="23.3" r="1.5" fill="#fce4ec"/><circle cx="267.9" cy="16.4" r="1.2" fill="#f6b8c8"/><circle cx="270.8" cy="17.9" r="1.0" fill="#ffe680"/><circle cx="303.6" cy="16.0" r="0.7" fill="#ffe680"/><circle cx="321.2" cy="26.4" r="1.1" fill="#fce4ec"/><circle cx="342.0" cy="33.5" r="0.8" fill="#ffe680"/><circle cx="263.8" cy="33.9" r="1.5" fill="#b8e8a0"/><circle cx="237.0" cy="38.5" r="1.0" fill="#f49ab0"/><circle cx="239.5" cy="37.0" r="1.1" fill="#ffffff"/><circle cx="242.6" cy="48.3" r="0.8" fill="#ffffff"/><circle cx="228.9" cy="44.5" r="0.7" fill="#fce4ec"/><circle cx="246.5" cy="17.4" r="1.2" fill="#f6b8c8"/><circle cx="239.3" cy="39.8" r="1.4" fill="#b8e8a0"/><circle cx="240.9" cy="25.6" r="0.9" fill="#f49ab0"/><circle cx="214.8" cy="61.3" r="0.8" fill="#ffffff"/><circle cx="222.2" cy="29.8" r="0.9" fill="#f49ab0"/><circle cx="226.4" cy="43.1" r="1.5" fill="#f6b8c8"/><circle cx="237.3" cy="50.3" r="1.0" fill="#ffe680"/><circle cx="237.1" cy="25.7" r="0.8" fill="#ffffff"/><circle cx="221.9" cy="28.0" r="1.1" fill="#ffffff"/><circle cx="238.3" cy="50.5" r="0.8" fill="#f49ab0"/><circle cx="234.3" cy="29.0" r="0.5" fill="#ffe680"/><circle cx="230.1" cy="38.2" r="1.3" fill="#ffe680"/><circle cx="231.4" cy="41.5" r="1.1" fill="#f6b8c8"/><circle cx="227.0" cy="50.7" r="1.5" fill="#b8e8a0"/><circle cx="247.3" cy="39.8" r="1.2" fill="#ffe680"/><circle cx="223.6" cy="63.9" r="0.9" fill="#ffffff"/><circle cx="208.2" cy="25.2" r="0.6" fill="#ffffff"/><circle cx="237.7" cy="41.1" r="1.5" fill="#b8e8a0"/><circle cx="240.5" cy="35.2" r="0.7" fill="#ffd0a0"/><circle cx="261.7" cy="30.7" r="0.9" fill="#f6b8c8"/><circle cx="246.7" cy="59.5" r="1.5" fill="#ffe680"/><circle cx="236.3" cy="64.6" r="0.8" fill="#ffd0a0"/><circle cx="221.8" cy="58.9" r="1.5" fill="#f6b8c8"/><circle cx="239.1" cy="37.5" r="0.7" fill="#f49ab0"/><circle cx="232.1" cy="32.5" r="0.9" fill="#f6b8c8"/><circle cx="232.6" cy="59.0" r="1.4" fill="#ffd0a0"/><circle cx="235.9" cy="20.3" r="1.5" fill="#f6b8c8"/><circle cx="233.6" cy="37.4" r="1.5" fill="#fce4ec"/><circle cx="247.0" cy="77.9" r="1.2" fill="#f6b8c8"/><circle cx="228.9" cy="67.1" r="1.6" fill="#ffd0a0"/><circle cx="210.4" cy="84.3" r="1.0" fill="#ffffff"/><circle cx="245.3" cy="75.6" r="1.6" fill="#ffffff"/><circle cx="220.1" cy="47.7" r="1.1" fill="#ffffff"/><circle cx="238.7" cy="48.2" r="1.3" fill="#ffe680"/><circle cx="237.4" cy="38.9" r="1.0" fill="#ffd0a0"/><circle cx="324.6" cy="61.5" r="0.5" fill="#f49ab0"/><circle cx="333.6" cy="65.9" r="0.5" fill="#ffffff"/><circle cx="332.7" cy="50.1" r="1.1" fill="#ffffff"/><circle cx="321.8" cy="56.2" r="0.8" fill="#b8e8a0"/><circle cx="317.2" cy="72.8" r="0.7" fill="#ffd0a0"/><circle cx="328.8" cy="97.4" r="1.3" fill="#f6b8c8"/><circle cx="316.7" cy="68.3" r="1.3" fill="#f6b8c8"/><circle cx="333.1" cy="59.9" r="1.0" fill="#b8e8a0"/><circle cx="337.5" cy="93.2" r="0.8" fill="#f6b8c8"/><circle cx="326.4" cy="64.0" r="0.9" fill="#f6b8c8"/><circle cx="308.7" cy="65.4" r="1.0" fill="#b8e8a0"/><circle cx="322.2" cy="45.8" r="0.9" fill="#ffd0a0"/><circle cx="316.7" cy="55.9" r="0.9" fill="#f6b8c8"/><circle cx="322.0" cy="82.9" r="0.6" fill="#f6b8c8"/><circle cx="333.2" cy="62.7" r="0.9" fill="#f6b8c8"/><circle cx="326.3" cy="69.2" r="1.0" fill="#b8e8a0"/><circle cx="328.6" cy="54.5" r="1.3" fill="#fce4ec"/><circle cx="332.8" cy="72.6" r="0.6" fill="#f6b8c8"/><circle cx="317.6" cy="65.8" r="0.8" fill="#fce4ec"/><circle cx="308.5" cy="64.2" r="1.1" fill="#ffd0a0"/><circle cx="334.1" cy="28.1" r="1.3" fill="#ffe680"/><circle cx="330.5" cy="43.7" r="1.2" fill="#f6b8c8"/><circle cx="333.5" cy="75.5" r="1.1" fill="#ffffff"/><circle cx="328.3" cy="63.3" r="1.0" fill="#f49ab0"/><circle cx="315.5" cy="68.5" r="1.1" fill="#b8e8a0"/><circle cx="337.3" cy="56.5" r="0.6" fill="#f6b8c8"/><circle cx="344.4" cy="90.0" r="1.3" fill="#ffffff"/><circle cx="326.5" cy="84.0" r="1.2" fill="#ffffff"/><circle cx="337.9" cy="63.0" r="0.6" fill="#ffffff"/><circle cx="319.3" cy="70.4" r="0.9" fill="#ffffff"/><circle cx="309.4" cy="50.7" r="1.1" fill="#ffd0a0"/><circle cx="328.8" cy="86.6" r="0.5" fill="#f6b8c8"/><circle cx="304.5" cy="64.8" r="0.7" fill="#f6b8c8"/><circle cx="323.5" cy="49.0" r="0.8" fill="#ffffff"/><circle cx="326.1" cy="61.8" r="0.7" fill="#f6b8c8"/><circle cx="317.9" cy="92.8" r="1.3" fill="#ffffff"/><circle cx="316.5" cy="61.0" r="0.8" fill="#ffd0a0"/><circle cx="327.9" cy="52.3" r="0.8" fill="#fce4ec"/><circle cx="329.7" cy="64.5" r="0.6" fill="#fce4ec"/><circle cx="339.6" cy="72.1" r="1.0" fill="#ffffff"/><circle cx="87.2" cy="67.3" r="0.6" fill="#f49ab0"/><circle cx="52.9" cy="51.8" r="0.8" fill="#ffffff"/><circle cx="2.7" cy="30.8" r="0.7" fill="#b8e8a0"/><circle cx="89.3" cy="88.1" r="0.7" fill="#f6b8c8"/><circle cx="97.8" cy="56.1" r="0.7" fill="#fce4ec"/><circle cx="2.0" cy="39.8" r="0.7" fill="#b8e8a0"/><circle cx="111.5" cy="39.3" r="0.6" fill="#ffffff"/><circle cx="60.5" cy="30.5" r="0.8" fill="#f49ab0"/><circle cx="68.7" cy="78.8" r="0.5" fill="#ffffff"/><circle cx="44.0" cy="46.1" r="0.5" fill="#ffd0a0"/><circle cx="82.7" cy="55.6" r="0.8" fill="#fce4ec"/><circle cx="96.2" cy="47.3" r="0.7" fill="#ffd0a0"/><circle cx="22.2" cy="40.2" r="0.6" fill="#ffe680"/><circle cx="57.4" cy="12.2" r="0.5" fill="#f6b8c8"/><circle cx="76.0" cy="68.4" r="0.6" fill="#b8e8a0"/><circle cx="101.6" cy="49.5" r="0.6" fill="#f6b8c8"/><circle cx="80.7" cy="55.7" r="0.7" fill="#f49ab0"/><circle cx="113.0" cy="25.8" r="0.6" fill="#ffffff"/><circle cx="85.7" cy="83.1" r="0.7" fill="#b8e8a0"/><circle cx="77.6" cy="45.2" r="0.5" fill="#ffffff"/><circle cx="47.7" cy="46.5" r="0.6" fill="#ffd0a0"/><circle cx="55.8" cy="45.8" r="0.5" fill="#ffffff"/><ellipse cx="161.8" cy="58.799999999999955" rx="26" ry="12" fill="#f4ccd6" opacity=".55"/><circle cx="291.6" cy="19.6" r="4.6" fill="#f7dbe0"/><circle cx="295.3" cy="27.3" r="4.6" fill="#f7dbe0"/><circle cx="146.8" cy="62.8" r="4" fill="#f7dbe0"/><circle cx="155.8" cy="56.8" r="3.6" fill="#f7dbe0"/><circle cx="138.8" cy="70.8" r="3.6" fill="#f7dbe0"/><circle cx="166.8" cy="64.8" r="3.4" fill="#f7dbe0"/><circle cx="184.8" cy="47.8" r="3.2" fill="#f7dbe0"/><circle cx="126.8" cy="54.8" r="3" fill="#f7dbe0"/><circle cx="237.8" cy="-4.2" r="3" fill="#f7dbe0"/><ellipse cx="173.3" cy="95.79999999999995" rx="36" ry="32" fill="url(#bV)"/><ellipse cx="280.8" cy="70.29999999999995" rx="42" ry="40.5" fill="url(#bY)" transform="rotate(-20 280.8 70.29999999999995)"/><ellipse cx="273.8" cy="58.799999999999955" rx="9" ry="6.5" fill="#fbf9c4" opacity=".7" transform="rotate(-25 273.8 58.799999999999955)"/><ellipse cx="335.8" cy="114.79999999999995" rx="24" ry="43" fill="url(#bP)" transform="rotate(6 335.8 114.79999999999995)"/><ellipse cx="340.8" cy="100.79999999999995" rx="4" ry="11" fill="#f8e4f6" opacity=".7" transform="rotate(12 340.8 100.79999999999995)"/><path d="M303.8 170.79999999999995L310.8 169.79999999999995L328.8 180.79999999999995L342.8 192.79999999999995L324.8 211.79999999999995L304.8 237.5999999999999L274.8 237.5999999999999L289.8 194.79999999999995Z" fill="#e9b57c"/><path d="M303.8 171.79999999999995L311.8 170.79999999999995L327.8 180.79999999999995L320.8 196.79999999999995L311.8 200.79999999999995L304.8 187.79999999999995Z" fill="#b4691f"/><path d="M314.8 194.79999999999995L326.8 183.79999999999995L341.8 192.79999999999995L326.8 208.79999999999995Z" fill="#dc9c58"/><path d="M310.8 196.79999999999995L318.8 202.79999999999995L316.8 197.79999999999995Z" fill="#7a1a20"/><circle cx="155.5" cy="7.5" r="5.7" fill="#f3dc2e"/><ellipse cx="153.8" cy="5.5" rx="2.2" ry="1.6" fill="#fff7a0" opacity=".75"/><circle cx="169.5" cy="11.3" r="5.7" fill="#d3122a"/><ellipse cx="167.8" cy="9.3" rx="2.2" ry="1.6" fill="#ff8a8a" opacity=".75"/><circle cx="159.2" cy="19.3" r="5.7" fill="#58b82a"/><ellipse cx="157.5" cy="17.3" rx="2.2" ry="1.6" fill="#c4f08a" opacity=".75"/><circle cx="173.2" cy="21.2" r="5.7" fill="#f5851c"/><ellipse cx="171.5" cy="19.2" rx="2.2" ry="1.6" fill="#ffd08a" opacity=".75"/><circle cx="150.8" cy="33.1" r="5.7" fill="#f3dc2e"/><ellipse cx="149.1" cy="31.1" rx="2.2" ry="1.6" fill="#fff7a0" opacity=".75"/><circle cx="176.9" cy="32.7" r="5.7" fill="#58b82a"/><ellipse cx="175.2" cy="30.7" rx="2.2" ry="1.6" fill="#c4f08a" opacity=".75"/><circle cx="190.0" cy="35.2" r="5.7" fill="#f3dc2e"/><ellipse cx="188.3" cy="33.2" rx="2.2" ry="1.6" fill="#fff7a0" opacity=".75"/><circle cx="134.0" cy="43.9" r="5.7" fill="#d3122a"/><ellipse cx="132.3" cy="41.9" rx="2.2" ry="1.6" fill="#ff8a8a" opacity=".75"/><circle cx="148.0" cy="44.9" r="5.7" fill="#58b82a"/><ellipse cx="146.3" cy="42.9" rx="2.2" ry="1.6" fill="#c4f08a" opacity=".75"/><circle cx="164.2" cy="49.9" r="5.7" fill="#58b82a"/><ellipse cx="162.5" cy="47.9" rx="2.2" ry="1.6" fill="#c4f08a" opacity=".75"/><circle cx="200.3" cy="15.9" r="5.7" fill="#d3122a"/><ellipse cx="198.6" cy="13.9" rx="2.2" ry="1.6" fill="#ff8a8a" opacity=".75"/><circle cx="202.1" cy="31.2" r="5.7" fill="#7a1246"/><ellipse cx="200.4" cy="29.2" rx="2.2" ry="1.6" fill="#c86a9a" opacity=".75"/><circle cx="211.5" cy="8.5" r="5.7" fill="#58b82a"/><ellipse cx="209.8" cy="6.5" rx="2.2" ry="1.6" fill="#c4f08a" opacity=".75"/><circle cx="221.7" cy="15.0" r="5.7" fill="#7a1246"/><ellipse cx="220.0" cy="13.0" rx="2.2" ry="1.6" fill="#c86a9a" opacity=".75"/><circle cx="218.0" cy="29.9" r="5.7" fill="#7a1246"/><ellipse cx="216.3" cy="27.9" rx="2.2" ry="1.6" fill="#c86a9a" opacity=".75"/><circle cx="229.2" cy="26.2" r="5.7" fill="#f3dc2e"/><ellipse cx="227.5" cy="24.2" rx="2.2" ry="1.6" fill="#fff7a0" opacity=".75"/><circle cx="219.9" cy="41.1" r="5.7" fill="#f5851c"/><ellipse cx="218.2" cy="39.1" rx="2.2" ry="1.6" fill="#ffd08a" opacity=".75"/><circle cx="229.6" cy="46.4" r="5.7" fill="#d3122a"/><ellipse cx="227.9" cy="44.4" rx="2.2" ry="1.6" fill="#ff8a8a" opacity=".75"/><circle cx="222.1" cy="55.1" r="5.7" fill="#7a1246"/><ellipse cx="220.4" cy="53.1" rx="2.2" ry="1.6" fill="#c86a9a" opacity=".75"/><circle cx="211.5" cy="57.0" r="5.7" fill="#f5851c"/><ellipse cx="209.8" cy="55.0" rx="2.2" ry="1.6" fill="#ffd08a" opacity=".75"/><circle cx="194.7" cy="60.7" r="5.7" fill="#f3dc2e"/><ellipse cx="193.0" cy="58.7" rx="2.2" ry="1.6" fill="#fff7a0" opacity=".75"/><circle cx="203.1" cy="69.1" r="5.7" fill="#f5851c"/><ellipse cx="201.4" cy="67.1" rx="2.2" ry="1.6" fill="#ffd08a" opacity=".75"/><circle cx="215.2" cy="68.2" r="5.7" fill="#f5851c"/><ellipse cx="213.5" cy="66.2" rx="2.2" ry="1.6" fill="#ffd08a" opacity=".75"/><circle cx="214.3" cy="1.4" r="5.7" fill="#7a1246"/><ellipse cx="212.6" cy="-0.6" rx="2.2" ry="1.6" fill="#c86a9a" opacity=".75"/><circle cx="242.8" cy="3.8" r="5.7" fill="#f5851c"/><ellipse cx="241.1" cy="1.8" rx="2.2" ry="1.6" fill="#ffd08a" opacity=".75"/><circle cx="254.8" cy="11.8" r="5.7" fill="#7a1246"/><ellipse cx="253.1" cy="9.8" rx="2.2" ry="1.6" fill="#c86a9a" opacity=".75"/><circle cx="262.8" cy="4.8" r="5.7" fill="#58b82a"/><ellipse cx="261.1" cy="2.8" rx="2.2" ry="1.6" fill="#c4f08a" opacity=".75"/><circle cx="240.8" cy="25.8" r="5.7" fill="#7a1246"/><ellipse cx="239.1" cy="23.8" rx="2.2" ry="1.6" fill="#c86a9a" opacity=".75"/><circle cx="249.8" cy="20.8" r="5.7" fill="#f5851c"/><ellipse cx="248.1" cy="18.8" rx="2.2" ry="1.6" fill="#ffd08a" opacity=".75"/><circle cx="261.8" cy="19.8" r="5.7" fill="#58b82a"/><ellipse cx="260.1" cy="17.8" rx="2.2" ry="1.6" fill="#c4f08a" opacity=".75"/><circle cx="261.8" cy="31.8" r="5.7" fill="#7a1246"/><ellipse cx="260.1" cy="29.8" rx="2.2" ry="1.6" fill="#c86a9a" opacity=".75"/><circle cx="271.8" cy="26.8" r="5.7" fill="#f3dc2e"/><ellipse cx="270.1" cy="24.8" rx="2.2" ry="1.6" fill="#fff7a0" opacity=".75"/><circle cx="277.8" cy="18.8" r="5.7" fill="#f3dc2e"/><ellipse cx="276.1" cy="16.8" rx="2.2" ry="1.6" fill="#fff7a0" opacity=".75"/><circle cx="244.8" cy="37.8" r="5.7" fill="#f3dc2e"/><ellipse cx="243.1" cy="35.8" rx="2.2" ry="1.6" fill="#fff7a0" opacity=".75"/><circle cx="304.8" cy="29.8" r="5.7" fill="#f3dc2e"/><ellipse cx="303.1" cy="27.8" rx="2.2" ry="1.6" fill="#fff7a0" opacity=".75"/><circle cx="319.8" cy="32.8" r="5.7" fill="#f3dc2e"/><ellipse cx="318.1" cy="30.8" rx="2.2" ry="1.6" fill="#fff7a0" opacity=".75"/><circle cx="323.8" cy="41.8" r="5.7" fill="#f3dc2e"/><ellipse cx="322.1" cy="39.8" rx="2.2" ry="1.6" fill="#fff7a0" opacity=".75"/><circle cx="323.8" cy="55.8" r="5.7" fill="#7a1246"/><ellipse cx="322.1" cy="53.8" rx="2.2" ry="1.6" fill="#c86a9a" opacity=".75"/><circle cx="323.8" cy="81.5" r="5.7" fill="#58b82a"/><ellipse cx="322.1" cy="79.5" rx="2.2" ry="1.6" fill="#c4f08a" opacity=".75"/><circle cx="312.8" cy="98.8" r="5.7" fill="#f5851c"/><ellipse cx="311.1" cy="96.8" rx="2.2" ry="1.6" fill="#ffd08a" opacity=".75"/><circle cx="304.8" cy="116.4" r="5.7" fill="#f5851c"/><ellipse cx="303.1" cy="114.4" rx="2.2" ry="1.6" fill="#ffd08a" opacity=".75"/><circle cx="302.2" cy="127.8" r="5.7" fill="#7a1246"/><ellipse cx="300.5" cy="125.8" rx="2.2" ry="1.6" fill="#c86a9a" opacity=".75"/><circle cx="302.8" cy="139.2" r="5.7" fill="#f5851c"/><ellipse cx="301.1" cy="137.2" rx="2.2" ry="1.6" fill="#ffd08a" opacity=".75"/><circle cx="302.2" cy="156.0" r="5.7" fill="#d3122a"/><ellipse cx="300.5" cy="154.0" rx="2.2" ry="1.6" fill="#ff8a8a" opacity=".75"/><circle cx="318.3" cy="153.8" r="3.8" fill="#e633a8"/><ellipse cx="317.2" cy="152.5" rx="1.4" ry="1.1" fill="#ffa8e0" opacity=".75"/><circle cx="319.8" cy="163.8" r="5.7" fill="#d3122a"/><ellipse cx="318.1" cy="161.8" rx="2.2" ry="1.6" fill="#ff8a8a" opacity=".75"/><circle cx="344.3" cy="168.1" r="4.2" fill="#58b82a"/><ellipse cx="343.0" cy="166.6" rx="1.6" ry="1.2" fill="#c4f08a" opacity=".75"/><circle cx="308.8" cy="106.8" r="4" fill="#d3122a"/><ellipse cx="307.6" cy="105.4" rx="1.5" ry="1.1" fill="#ff8a8a" opacity=".75"/><circle cx="345.2" cy="11.6" r="4.5" fill="#f3dc2e"/><ellipse cx="343.8" cy="10.0" rx="1.7" ry="1.3" fill="#fff7a0" opacity=".75"/><circle cx="345.8" cy="53.8" r="4.2" fill="#d3122a"/><ellipse cx="344.5" cy="52.3" rx="1.6" ry="1.2" fill="#ff8a8a" opacity=".75"/><circle cx="235.6" cy="13.2" r="5.7" fill="#58b82a"/><ellipse cx="233.9" cy="11.2" rx="2.2" ry="1.6" fill="#c4f08a" opacity=".75"/><circle cx="288.4" cy="115.6" r="5.7" fill="#f3dc2e"/><ellipse cx="286.7" cy="113.6" rx="2.2" ry="1.6" fill="#fff7a0" opacity=".75"/><circle cx="288.4" cy="126.8" r="5.7" fill="#58b82a"/><ellipse cx="286.7" cy="124.8" rx="2.2" ry="1.6" fill="#c4f08a" opacity=".75"/><circle cx="290.8" cy="140.8" r="5.7" fill="#d3122a"/><ellipse cx="289.1" cy="138.8" rx="2.2" ry="1.6" fill="#ff8a8a" opacity=".75"/><circle cx="313.7" cy="186.8" r="5.4" fill="#58b82a"/><ellipse cx="312.1" cy="184.9" rx="2.1" ry="1.5" fill="#c4f08a" opacity=".75"/><circle cx="322.7" cy="181.5" r="5.6" fill="#f3dc2e"/><ellipse cx="321.0" cy="179.5" rx="2.1" ry="1.6" fill="#fff7a0" opacity=".75"/></symbol></defs></svg>
<div style="left:0;top:783.3px;width:36.6px;height:141.2px;overflow:hidden"><svg style="left:-169.4px;top:0" width="206.0" height="141.2"><use href="#photo" width="206.0" height="141.2"/></svg></div>
<svg style="left:0;top:0" width="750" height="800"><rect x="270.8" y="690" width="228" height="15.2" fill="#e6e4f6"/><rect x="270.8" y="690" width="14.4" height="95" fill="#e6e4f6"/><rect x="485" y="690" width="14" height="15.2" fill="#ecd8f0"/><rect x="493" y="688" width="1.6" height="18" fill="#d64a9a"/><line x1="285.2" y1="690.0" x2="285.2" y2="705.2" stroke="#222" stroke-width="1"/><line x1="291.5" y1="701.2" x2="291.5" y2="705.2" stroke="#222" stroke-width="1"/><line x1="297.8" y1="701.2" x2="297.8" y2="705.2" stroke="#222" stroke-width="1"/><line x1="304.0" y1="701.2" x2="304.0" y2="705.2" stroke="#222" stroke-width="1"/><line x1="310.3" y1="701.2" x2="310.3" y2="705.2" stroke="#222" stroke-width="1"/><line x1="316.6" y1="699.2" x2="316.6" y2="705.2" stroke="#222" stroke-width="1"/><line x1="322.9" y1="701.2" x2="322.9" y2="705.2" stroke="#222" stroke-width="1"/><line x1="329.2" y1="701.2" x2="329.2" y2="705.2" stroke="#222" stroke-width="1"/><line x1="335.4" y1="701.2" x2="335.4" y2="705.2" stroke="#222" stroke-width="1"/><line x1="341.7" y1="701.2" x2="341.7" y2="705.2" stroke="#222" stroke-width="1"/><line x1="348.0" y1="690.0" x2="348.0" y2="705.2" stroke="#222" stroke-width="1"/><line x1="354.3" y1="701.2" x2="354.3" y2="705.2" stroke="#222" stroke-width="1"/><line x1="360.6" y1="701.2" x2="360.6" y2="705.2" stroke="#222" stroke-width="1"/><line x1="366.8" y1="701.2" x2="366.8" y2="705.2" stroke="#222" stroke-width="1"/><line x1="373.1" y1="701.2" x2="373.1" y2="705.2" stroke="#222" stroke-width="1"/><line x1="379.4" y1="699.2" x2="379.4" y2="705.2" stroke="#222" stroke-width="1"/><line x1="385.7" y1="701.2" x2="385.7" y2="705.2" stroke="#222" stroke-width="1"/><line x1="392.0" y1="701.2" x2="392.0" y2="705.2" stroke="#222" stroke-width="1"/><line x1="398.2" y1="701.2" x2="398.2" y2="705.2" stroke="#222" stroke-width="1"/><line x1="404.5" y1="701.2" x2="404.5" y2="705.2" stroke="#222" stroke-width="1"/><line x1="410.8" y1="690.0" x2="410.8" y2="705.2" stroke="#222" stroke-width="1"/><line x1="417.1" y1="701.2" x2="417.1" y2="705.2" stroke="#222" stroke-width="1"/><line x1="423.4" y1="701.2" x2="423.4" y2="705.2" stroke="#222" stroke-width="1"/><line x1="429.6" y1="701.2" x2="429.6" y2="705.2" stroke="#222" stroke-width="1"/><line x1="435.9" y1="701.2" x2="435.9" y2="705.2" stroke="#222" stroke-width="1"/><line x1="442.2" y1="699.2" x2="442.2" y2="705.2" stroke="#222" stroke-width="1"/><line x1="448.5" y1="701.2" x2="448.5" y2="705.2" stroke="#222" stroke-width="1"/><line x1="454.8" y1="701.2" x2="454.8" y2="705.2" stroke="#222" stroke-width="1"/><line x1="461.0" y1="701.2" x2="461.0" y2="705.2" stroke="#222" stroke-width="1"/><line x1="467.3" y1="701.2" x2="467.3" y2="705.2" stroke="#222" stroke-width="1"/><line x1="473.6" y1="690.0" x2="473.6" y2="705.2" stroke="#222" stroke-width="1"/><line x1="479.9" y1="701.2" x2="479.9" y2="705.2" stroke="#222" stroke-width="1"/><line x1="486.2" y1="701.2" x2="486.2" y2="705.2" stroke="#222" stroke-width="1"/><line x1="492.4" y1="701.2" x2="492.4" y2="705.2" stroke="#222" stroke-width="1"/><line x1="270.8" y1="705.2" x2="285.2" y2="705.2" stroke="#222" stroke-width="1"/><line x1="281.2" y1="711.8" x2="285.2" y2="711.8" stroke="#222" stroke-width="1"/><line x1="281.2" y1="718.3" x2="285.2" y2="718.3" stroke="#222" stroke-width="1"/><line x1="281.2" y1="724.9" x2="285.2" y2="724.9" stroke="#222" stroke-width="1"/><line x1="281.2" y1="731.4" x2="285.2" y2="731.4" stroke="#222" stroke-width="1"/><line x1="279.2" y1="738.0" x2="285.2" y2="738.0" stroke="#222" stroke-width="1"/><line x1="281.2" y1="744.5" x2="285.2" y2="744.5" stroke="#222" stroke-width="1"/><line x1="281.2" y1="751.1" x2="285.2" y2="751.1" stroke="#222" stroke-width="1"/><line x1="281.2" y1="757.6" x2="285.2" y2="757.6" stroke="#222" stroke-width="1"/><line x1="281.2" y1="764.2" x2="285.2" y2="764.2" stroke="#222" stroke-width="1"/><line x1="270.8" y1="770.7" x2="285.2" y2="770.7" stroke="#222" stroke-width="1"/><line x1="281.2" y1="777.2" x2="285.2" y2="777.2" stroke="#222" stroke-width="1"/><line x1="281.2" y1="783.8" x2="285.2" y2="783.8" stroke="#222" stroke-width="1"/><line x1="281.2" y1="790.4" x2="285.2" y2="790.4" stroke="#222" stroke-width="1"/><line x1="270.8" y1="705.2" x2="499" y2="705.2" stroke="#111" stroke-width="1.4"/><line x1="285.2" y1="690" x2="285.2" y2="785" stroke="#111" stroke-width="1.4"/></svg>
<span class="t" style="left:273px;top:693.5px;font-size:8.5px;letter-spacing:-.5px;color:#222">cm</span>
<span class="t" style="left:288.2px;top:692px;font-size:9px;letter-spacing:0;color:#222">0</span>
<span class="t" style="left:351.0px;top:692px;font-size:9px;letter-spacing:0;color:#222">10</span>
<span class="t" style="left:413.8px;top:692px;font-size:9px;letter-spacing:0;color:#222">20</span>
<span class="t" style="left:476.6px;top:692px;font-size:9px;letter-spacing:0;color:#222">30</span>
<span class="t" style="left:272.5px;top:708.2px;font-size:9px;letter-spacing:0;color:#222;transform-origin:0 0;transform:rotate(-90deg) translateX(-100%)">0</span>
<span class="t" style="left:272.5px;top:773.7px;font-size:9px;letter-spacing:0;color:#222;transform-origin:0 0;transform:rotate(-90deg) translateX(-100%)">10</span>
<svg style="left:285.2px;top:705.2px" width="346.6" height="237.6"><use href="#photo" width="346.6" height="237.6"/></svg>
<div style="left:284.7px;top:704.7px;width:347.8px;height:238.79999999999998px;border:1px solid #2a3a44"></div>
<div style="left:492.2px;top:705.2px;width:1.2px;height:237.6px;background:#20262c"></div>
<div style="left:493px;top:1128px;width:1.3px;height:10px;background:#c05a8a"></div>
<div style="left:283.2px;top:703.2px;width:4.6px;height:4.6px;border:1px solid #222;border-radius:50%;background:#fff"></div>
<div style="left:456.5px;top:703.2px;width:4.6px;height:4.6px;border:1px solid #222;border-radius:50%;background:#fff"></div>
<div style="left:629.8px;top:703.2px;width:4.6px;height:4.6px;border:1px solid #222;border-radius:50%;background:#fff"></div>
<div style="left:629.8px;top:822.0px;width:4.6px;height:4.6px;border:1px solid #222;border-radius:50%;background:#fff"></div>
<div style="left:629.8px;top:940.8px;width:4.6px;height:4.6px;border:1px solid #222;border-radius:50%;background:#fff"></div>
<div style="left:726.8px;top:686px;width:4.4px;height:559.5px;background:#f8f8f8"></div>
<div style="left:731.1px;top:685.8px;width:19px;height:38px;background:linear-gradient(#e4e7f5 0,#e6e8f5 48%,#eceef8 50%,#d6daee 100%)"></div>
<span class="t" style="left:734.6px;top:690.2px;font-size:9.5px;letter-spacing:-.2px;color:#1e1e28">Layout</span>
<svg style="left:733px;top:706px" width="14" height="14" viewBox="0 0 14 14" fill="none" stroke="#5a5a68"><rect x="2.500" y="2.500" width="5.500" height="5.500" fill="#fafafa"/><path d="M5.200 8.500v2.500M9.500 5.200h2"/></svg>
<div style="left:731.1px;top:723.0px;width:19px;height:356.76px;background:#cacaca;border-top:1px solid #bdbdbd"></div>
<div style="left:733.6px;top:728.0px;width:6.2px;height:6.2px;border:1px solid #8e8e8e;background:#f4f4f4"></div>
<div style="left:735.2px;top:730.6px;width:3px;height:1px;background:#555"></div>
<span class="t" style="left:744.6px;top:725.9px;font-size:9.5px;letter-spacing:-.2px;font-weight:bold;color:#686868">P</span>
<div style="left:742px;top:738.4px;width:10px;height:14.84px;background:#fff;border-bottom:1px solid #dcdcdc"></div>
<span class="t" style="left:744.6px;top:740.8px;font-size:9.5px;letter-spacing:-.2px;color:#1e1e1e">W</span>
<div style="left:742px;top:753.3000000000001px;width:10px;height:14.84px;background:#fff;border-bottom:1px solid #dcdcdc"></div>
<span class="t" style="left:744.6px;top:755.7px;font-size:9.5px;letter-spacing:-.2px;color:#1e1e1e">H</span>
<div style="left:733.6px;top:772.5px;width:6.2px;height:6.2px;border:1px solid #8e8e8e;background:#f4f4f4"></div>
<div style="left:735.2px;top:775.1px;width:3px;height:1px;background:#555"></div>
<span class="t" style="left:744.6px;top:770.4px;font-size:9.5px;letter-spacing:-.2px;font-weight:bold;color:#686868">O</span>
<div style="left:742px;top:783.0px;width:10px;height:14.84px;background:#fff;border-bottom:1px solid #dcdcdc"></div>
<span class="t" style="left:744.6px;top:785.4px;font-size:9.5px;letter-spacing:-.2px;color:#a8a8a8">W</span>
<div style="left:742px;top:797.8000000000001px;width:10px;height:14.84px;background:#fff;border-bottom:1px solid #dcdcdc"></div>
<span class="t" style="left:744.6px;top:800.2px;font-size:9.5px;letter-spacing:-.2px;color:#a8a8a8">H</span>
<div style="left:733.6px;top:817.0px;width:6.2px;height:6.2px;border:1px solid #8e8e8e;background:#f4f4f4"></div>
<div style="left:735.2px;top:819.6px;width:3px;height:1px;background:#555"></div>
<span class="t" style="left:744.6px;top:814.9px;font-size:9.5px;letter-spacing:-.2px;font-weight:bold;color:#686868">O</span>
<div style="left:742px;top:827.5px;width:10px;height:14.84px;background:#fff;border-bottom:1px solid #dcdcdc"></div>
<span class="t" style="left:744.6px;top:829.9px;font-size:9.5px;letter-spacing:-.2px;color:#1e1e1e">X</span>
<div style="left:742px;top:842.3000000000001px;width:10px;height:14.84px;background:#fff;border-bottom:1px solid #dcdcdc"></div>
<span class="t" style="left:744.6px;top:844.7px;font-size:9.5px;letter-spacing:-.2px;color:#1e1e1e">Y</span>
<div style="left:733.6px;top:861.6px;width:6.2px;height:6.2px;border:1px solid #8e8e8e;background:#f4f4f4"></div>
<div style="left:735.2px;top:864.2px;width:3px;height:1px;background:#555"></div>
<span class="t" style="left:744.6px;top:859.5px;font-size:9.5px;letter-spacing:-.2px;font-weight:bold;color:#686868">O</span>
<div style="left:742px;top:872.0px;width:10px;height:14.84px;background:#fff;border-bottom:1px solid #dcdcdc"></div>
<span class="t" style="left:744.6px;top:874.4px;font-size:9.5px;letter-spacing:-.2px;color:#1e1e1e">W</span>
<div style="left:742px;top:886.8000000000001px;width:10px;height:14.84px;background:#fff;border-bottom:1px solid #dcdcdc"></div>
<span class="t" style="left:744.6px;top:889.2px;font-size:9.5px;letter-spacing:-.2px;color:#1e1e1e">H</span>
<div style="left:733.6px;top:906.1px;width:6.2px;height:6.2px;border:1px solid #8e8e8e;background:#f4f4f4"></div>
<div style="left:735.2px;top:908.7px;width:3px;height:1px;background:#555"></div>
<span class="t" style="left:744.6px;top:904.0px;font-size:9.5px;letter-spacing:-.2px;font-weight:bold;color:#686868">S</span>
<div style="left:742px;top:916.5px;width:10px;height:14.84px;background:#fff;border-bottom:1px solid #dcdcdc"></div>
<span class="t" style="left:744.6px;top:918.9px;font-size:9.5px;letter-spacing:-.2px;color:#1e1e1e">E</span>
<div style="left:733.6px;top:935.8px;width:6.2px;height:6.2px;border:1px solid #8e8e8e;background:#f4f4f4"></div>
<div style="left:735.2px;top:938.4px;width:3px;height:1px;background:#555"></div>
<span class="t" style="left:744.6px;top:933.6999999999999px;font-size:9.5px;letter-spacing:-.2px;font-weight:bold;color:#686868">C</span>
<div style="left:742px;top:946.2px;width:10px;height:14.84px;background:#fff;border-bottom:1px solid #dcdcdc"></div>
<span class="t" style="left:744.6px;top:948.6px;font-size:9.5px;letter-spacing:-.2px;color:#1e1e1e">C</span>
<span class="t" style="left:744.6px;top:963.4px;font-size:9.5px;letter-spacing:-.2px;color:#333">C</span>
<div style="left:733.6px;top:980.3px;width:6.2px;height:6.2px;border:1px solid #8e8e8e;background:#f4f4f4"></div>
<div style="left:735.2px;top:982.9px;width:3px;height:1px;background:#555"></div>
<span class="t" style="left:744.6px;top:978.1999999999999px;font-size:9.5px;letter-spacing:-.2px;font-weight:bold;color:#686868">R</span>
<div style="left:742px;top:990.7px;width:10px;height:14.84px;background:#fff;border-bottom:1px solid #dcdcdc"></div>
<span class="t" style="left:744.6px;top:993.1px;font-size:9.5px;letter-spacing:-.2px;color:#1e1e1e">X</span>
<div style="left:742px;top:1005.6px;width:10px;height:14.84px;background:#fff;border-bottom:1px solid #dcdcdc"></div>
<span class="t" style="left:744.6px;top:1008.0px;font-size:9.5px;letter-spacing:-.2px;color:#1e1e1e">Y</span>
<div style="left:742px;top:1020.4px;width:10px;height:14.84px;background:#fff;border-bottom:1px solid #dcdcdc"></div>
<span class="t" style="left:744.6px;top:1022.8px;font-size:9.5px;letter-spacing:-.2px;color:#1e1e1e">D</span>
<div style="left:742px;top:1035.1999999999998px;width:10px;height:14.84px;background:#fff;border-bottom:1px solid #dcdcdc"></div>
<span class="t" style="left:744.6px;top:1037.6px;font-size:9.5px;letter-spacing:-.2px;color:#1e1e1e">X</span>
<div style="left:742px;top:1050.1px;width:10px;height:14.84px;background:#fff;border-bottom:1px solid #dcdcdc"></div>
<span class="t" style="left:744.6px;top:1052.5px;font-size:9.5px;letter-spacing:-.2px;color:#1e1e1e">Y</span>
<div style="left:742px;top:1064.8999999999999px;width:10px;height:14.84px;background:#fff;border-bottom:1px solid #dcdcdc"></div>
<span class="t" style="left:744.6px;top:1067.3px;font-size:9.5px;letter-spacing:-.2px;color:#1e1e1e">P</span>
<div style="left:731.1px;top:1079.7599999999998px;width:19px;height:107.24000000000024px;background:#fff;border-left:1px solid #cfcfcf"></div>
<div style="left:731.1px;top:1184.5px;width:19px;height:3px;background:#e8e8ea;border-top:1px solid #c4c4c4"></div>
<div style="left:731.1px;top:1187.5px;width:19px;height:40px;background:#f0f0f0;border:1px solid #c8c8c8;border-right:none"></div>
<span class="t" style="left:736.3px;top:1192px;font-weight:bold;letter-spacing:-.5px;color:#111;font-size:10px">Copies</span>
<div style="left:731.1px;top:1227.5px;width:19px;height:18px;background:#ececec;border-left:1px solid #c8c8c8"></div>
<svg style="left:735px;top:1230px" width="14" height="14" viewBox="0 0 14 14"><path d="M1 3l3-2 3 2-3 2z" fill="#d8d020" stroke="#555" stroke-width=".6"/><path d="M8 6l2-2 2 2-2 2z" fill="#7030a0" stroke="#333" stroke-width=".6"/><path d="M7 11l2-2 2 2-2 2z" fill="#20a0a0" stroke="#333" stroke-width=".6"/><path d="M4 4l5 5M9 9l1-2" stroke="#333" stroke-width=".8" fill="none"/></svg>
<span class="t" style="left:749px;top:1232px;font-size:9.5px;letter-spacing:-.2px;color:#222">Layout</span>
<div style="left:169.4px;top:781.6px;width:414.4px;height:347.8px;border-radius:5px;box-shadow:2px 2px 7px 1px rgba(0,0,0,.68),2px 3px 10px 3px rgba(0,0,0,.25);border:1px solid #3b444e;background:linear-gradient(90deg,#adbfd0,#a4b8cc 50%,#8ca6c2 96%,#86a0be 100%)"></div>
<div style="left:170.4px;top:782.6px;width:412.4px;height:20.6px;border-radius:4px 4px 0 0;background:linear-gradient(90deg,#b3c3d3 0,#b0c2d5 24%,#9ec3e6 29%,#86b6e6 45%,#84b2e4 62%,#8c86d2 68%,#8f84d0 74%,#a4cbe6 79%,#b4d6e4 85%,#cbd9b4 91%,#d2dcae 100%)"></div>
<div style="left:579.4px;top:795.6px;width:3.4px;height:331.8px;background:linear-gradient(#e6eadc 0,#dfe5e0 10%,#c4d2de 22%,#a8bcd0 45%,#90a8c4 100%)"></div>
<div style="left:170.4px;top:782.6px;width:412.4px;height:345.8px;border-radius:4px;border:1px solid rgba(255,255,255,.6)"></div>
<div style="left:419px;top:789px;width:12px;height:11px;border-radius:50%;background:#a04878;opacity:.55;filter:blur(1.5px)"></div>
<div style="left:503px;top:784px;width:11px;height:10px;border-radius:50%;background:#e8e070;opacity:.5;filter:blur(1.5px)"></div>
<span class="t" style="left:175.8px;top:786.6px;font-size:9.6px;letter-spacing:-.2px;color:#1a1a1a;text-shadow:0 0 4px #fff,0 0 6px #fff">Print</span>
<div style="left:547px;top:782.4px;width:32.2px;height:12.2px;border:1px solid #5a2a26;border-top:none;border-radius:0 0 4px 4px;background:linear-gradient(#e5a397 0,#d4695a 45%,#c33a2a 50%,#cf5a42 100%);box-shadow:inset 0 0 0 1px rgba(255,255,255,.35)"></div>
<svg style="left:559.6px;top:784.6px" width="7.9" height="7" viewBox="0 0 9 8"><path d="M1.200 1L7.800 7M7.800 1L1.200 7" stroke="#5a2020" stroke-width="2.800"/><path d="M1.200 1L7.800 7M7.800 1L1.200 7" stroke="#fff" stroke-width="1.700"/></svg>
<div style="left:174.4px;top:802.2px;width:404.4px;height:322px;background:#f0f0f0;border:1px solid #fdfdfd;box-shadow:0 0 0 1px rgba(90,100,115,.65)"></div>
<div style="left:181px;top:815px;width:391px;height:137px;border:1px solid #e0e0e0;border-radius:2px"></div>
<span class="t d" style="left:186px;top:810.6px;background:#f0f0f0;padding:0 3px">Current Print Setting</span>
<span class="t dr" style="right:506.2px;top:832.4px">Output Position</span>
<div class="fld" style="left:253.8px;top:828.2px;width:118px;height:16px"></div>
<span class="t d" style="left:258.4px;top:832.8px;">0.000 x 0.000 cm</span>
<span class="t dr" style="right:506.2px;top:852.1px">Output Size</span>
<div class="fld" style="left:253.8px;top:847.9px;width:118px;height:16px"></div>
<span class="t d" style="left:258.4px;top:852.5px;">54.864 x 36.576 cm</span>
<span class="t dr" style="right:506.2px;top:872.2px">Printer</span>
<div class="fld" style="left:253.8px;top:868.0px;width:297.2px;height:16px"></div>
<span class="t d" style="left:258.4px;top:872.6px;">Stylus Photo 1390/1400</span>
<span class="t dr" style="right:506.2px;top:892.0px">Port</span>
<div class="fld" style="left:253.8px;top:887.8px;width:297.2px;height:16px"></div>
<span class="t d" style="left:258.4px;top:892.4px;">USB001&nbsp; &lt;EPSON 1390 Series(Textile)&gt;</span>
<span class="t dr" style="right:506.2px;top:911.6px">ICC Profile</span>
<div class="fld" style="left:253.8px;top:907.4px;width:297.2px;height:16px"></div>
<span class="t d" style="left:258.4px;top:912.0px;">OFF</span>
<span class="t dr" style="right:506.2px;top:931.0px">Ink Limit</span>
<div class="fld" style="left:253.8px;top:926.8px;width:148.8px;height:16px"></div>
<span class="t d" style="left:258.4px;top:931.4px;">80.0, 80.0, 80.0, 80.0, White 100.0%</span>
<span class="t dr" style="right:317.4px;top:832.4px">Page Margin</span>
<div class="fld" style="left:441.6px;top:828.2px;width:109.4px;height:16px"></div>
<span class="t d" style="left:446.2px;top:832.8px;">0.000 x 0.000 cm</span>
<span class="t dr" style="right:317.4px;top:852.0px">White Layer</span>
<div style="left:441.6px;top:848.4px;width:109.4px;height:14.6px;border:1px solid #8a8a8a;border-radius:2.5px;background:linear-gradient(#f5f5f5 0,#eeeeee 48%,#e2e2e2 52%,#d6d6d6 100%);box-shadow:inset 0 0 0 1px #fcfcfc"></div>
<span class="t d" style="left:444.6px;top:852.1px;">Gradient White under any co</span>
<svg style="left:542.4px;top:854px" width="6" height="4"><path d="M0 0h6L3 3.600z" fill="#222"/></svg>
<div style="left:413.4px;top:926.8px;width:60.4px;height:16px;border:1px solid #959595;border-radius:2.5px;background:linear-gradient(#f5f5f5 0,#eeeeee 48%,#e1e1e1 52%,#d6d6d6 100%);box-shadow:inset 0 0 0 1px #fafafa"></div>
<span class="t d" style="left:413.4px;top:931.0px;width:73.7px;text-align:center">White Channel...</span>
<div class="fld" style="left:478.4px;top:926.8px;width:72.6px;height:16px"></div>
<span class="t d" style="left:478.4px;top:931.4px;width:88.5px;text-align:center">0,0,0,0,0,0,0,0</span>
<div style="left:181px;top:965px;width:190.5px;height:76px;border:1px solid #e0e0e0;border-radius:2px"></div>
<span class="t d" style="left:186px;top:960.6px;background:#f0f0f0;padding:0 3px">White Setting</span>
<span class="t dr" style="right:506.2px;top:980.1px">Resolution</span>
<div class="fld" style="left:253.8px;top:976.2px;width:107px;height:15.4px"></div>
<span class="t d" style="left:258.4px;top:980.5px;">1440 x 720 DPI</span>
<span class="t dr" style="right:504.2px;top:1001.6px">Copies</span>
<div style="left:253.8px;top:998.2px;width:49.4px;height:15px;border:1px solid #d0d0d0;border-top-color:#b8b8b8;background:#fff"></div>
<div style="left:296.8px;top:1000.7px;width:4px;height:10px;background:#3a8fe8"></div>
<span class="t dr" style="right:449.4px;top:1001.4px;color:#fff">1</span>
<div style="left:304.0px;top:998.2px;width:10.4px;height:7.5px;border:1px solid #bcbcbc;border-radius:1.5px;background:linear-gradient(#f6f6f6,#e0e0e0)"></div>
<svg style="left:307.0px;top:1000.6px" width="5" height="3"><path d="M0 3L2.500 0L5 3z" fill="#707070"/></svg>
<div style="left:304.0px;top:1005.7px;width:10.4px;height:7.5px;border:1px solid #bcbcbc;border-radius:1.5px;background:linear-gradient(#f6f6f6,#e0e0e0)"></div>
<svg style="left:307.0px;top:1008.1px" width="5" height="3"><path d="M0 0L2.500 3L5 0z" fill="#707070"/></svg>
<div style="left:381px;top:965px;width:190.5px;height:76px;border:1px solid #e0e0e0;border-radius:2px"></div>
<span class="t d" style="left:385.400px;top:960.6px;background:#f0f0f0;padding:0 3px">Color Setting</span>
<span class="t dr" style="right:306.2px;top:980.1px">Resolution</span>
<div class="fld" style="left:451.8px;top:976.2px;width:106.8px;height:15.4px"></div>
<span class="t d" style="left:456.4px;top:980.5px;">1440 x 720 DPI</span>
<span class="t dr" style="right:307.4px;top:1001.6px">Copies</span>
<div style="left:452.8px;top:998.2px;width:48.2px;height:15px;border:1px solid #d0d0d0;border-top-color:#b8b8b8;background:#fff"></div>
<span class="t dr" style="right:251.6px;top:1001.4px;">1</span>
<div style="left:501.8px;top:998.2px;width:10.4px;height:7.5px;border:1px solid #bcbcbc;border-radius:1.5px;background:linear-gradient(#f6f6f6,#e0e0e0)"></div>
<svg style="left:504.8px;top:1000.6px" width="5" height="3"><path d="M0 3L2.500 0L5 3z" fill="#707070"/></svg>
<div style="left:501.8px;top:1005.7px;width:10.4px;height:7.5px;border:1px solid #bcbcbc;border-radius:1.5px;background:linear-gradient(#f6f6f6,#e0e0e0)"></div>
<svg style="left:504.8px;top:1008.1px" width="5" height="3"><path d="M0 0L2.500 3L5 0z" fill="#707070"/></svg>
<div style="left:404.6px;top:1023.8px;width:8.4px;height:8.4px;border:1px solid #8a8a8a;background:linear-gradient(135deg,#d8d8d8,#f8f8f8)"></div>
<span class="t d" style="left:416.0px;top:1024.4px;">White Highlight</span>
<span class="t dr" style="right:268.4px;top:1055.4px">Set Copies</span>
<div style="left:493.8px;top:1052px;width:48.6px;height:16px;border:1px solid #d0d0d0;border-top-color:#b8b8b8;background:#fff"></div>
<span class="t dr" style="right:210.2px;top:1055.7px;">1</span>
<div style="left:543.1999999999999px;top:1052.0px;width:10.4px;height:8.0px;border:1px solid #bcbcbc;border-radius:1.5px;background:linear-gradient(#f6f6f6,#e0e0e0)"></div>
<svg style="left:546.1999999999999px;top:1054.4px" width="5" height="3"><path d="M0 3L2.500 0L5 3z" fill="#707070"/></svg>
<div style="left:543.1999999999999px;top:1060.0px;width:10.4px;height:8.0px;border:1px solid #bcbcbc;border-radius:1.5px;background:linear-gradient(#f6f6f6,#e0e0e0)"></div>
<svg style="left:546.1999999999999px;top:1062.4px" width="5" height="3"><path d="M0 0L2.500 3L5 0z" fill="#707070"/></svg>
<div style="left:190.8px;top:1079px;width:8.4px;height:8.4px;border:1px solid #8a8a8a;background:linear-gradient(135deg,#d8d8d8,#f8f8f8)"></div>
<span class="t d" style="left:202.2px;top:1079.6px;">Print Color First</span>
<div style="left:269.8px;top:1079px;width:8.4px;height:8.4px;border:1px solid #8a8a8a;background:linear-gradient(135deg,#d8d8d8,#f8f8f8)"></div>
<span class="t d" style="left:281.0px;top:1079.6px;">COLOR+WHITE</span>
<div style="left:351.4px;top:1101.4px;width:103.2px;height:14.4px;border:1px solid #959595;border-radius:2.5px;background:linear-gradient(#f5f5f5 0,#eeeeee 48%,#e1e1e1 52%,#d6d6d6 100%);box-shadow:inset 0 0 0 1px #fafafa"></div>
<span class="t d" style="left:351.4px;top:1104.8px;width:125.9px;text-align:center">Save as File(*.pm)...</span>
<div style="left:461.4px;top:1101.4px;width:50px;height:14.4px;border:1px solid #3c9bd9;border-radius:2.5px;background:linear-gradient(#f5f5f5 0,#eeeeee 48%,#e1e1e1 52%,#d6d6d6 100%);box-shadow:inset 0 0 0 1px #bfe6fb"></div>
<span class="t d" style="left:461.4px;top:1104.8px;width:61.0px;text-align:center">Print</span>
<div style="left:520.6px;top:1101.4px;width:50px;height:14.4px;border:1px solid #959595;border-radius:2.5px;background:linear-gradient(#f5f5f5 0,#eeeeee 48%,#e1e1e1 52%,#d6d6d6 100%);box-shadow:inset 0 0 0 1px #fafafa"></div>
<span class="t d" style="left:520.6px;top:1104.8px;width:61.0px;text-align:center">Cancel</span>
<div class="red" style="left:216.4px;top:994.8px;width:330.4px;height:23.4px"></div>
<div class="red" style="left:205.6px;top:1029.4px;width:358.6px;height:28.8px;background:rgba(240,240,240,.72)"></div>
<span class="t rt" style="left:222.8px;top:1036.2px;font-size:17.8px">Print white &amp; colorful ink by one pass</span>
<div class="red" style="left:182.2px;top:1060.8px;width:165.4px;height:37.4px"></div>
<div style="left:0px;top:1245px;width:750px;height:1px;background:#b9b9b9"></div>
<div style="left:0px;top:1246px;width:750px;height:12px;background:#f0eded"></div>
<div style="left:0px;top:1257.6px;width:750px;height:5px;background:linear-gradient(#f4f4f6,#eef8fc)"></div>
<div style="left:0px;top:1262.2px;width:750px;height:4px;background:linear-gradient(90deg,#1f4a74 0,#1d4870 40%,#183c60 64%,#16365a 94.4%,#8796a6 94.8%,#8a99a8 98%,#d6d6d6 98.300%)"></div>
</body></html>
